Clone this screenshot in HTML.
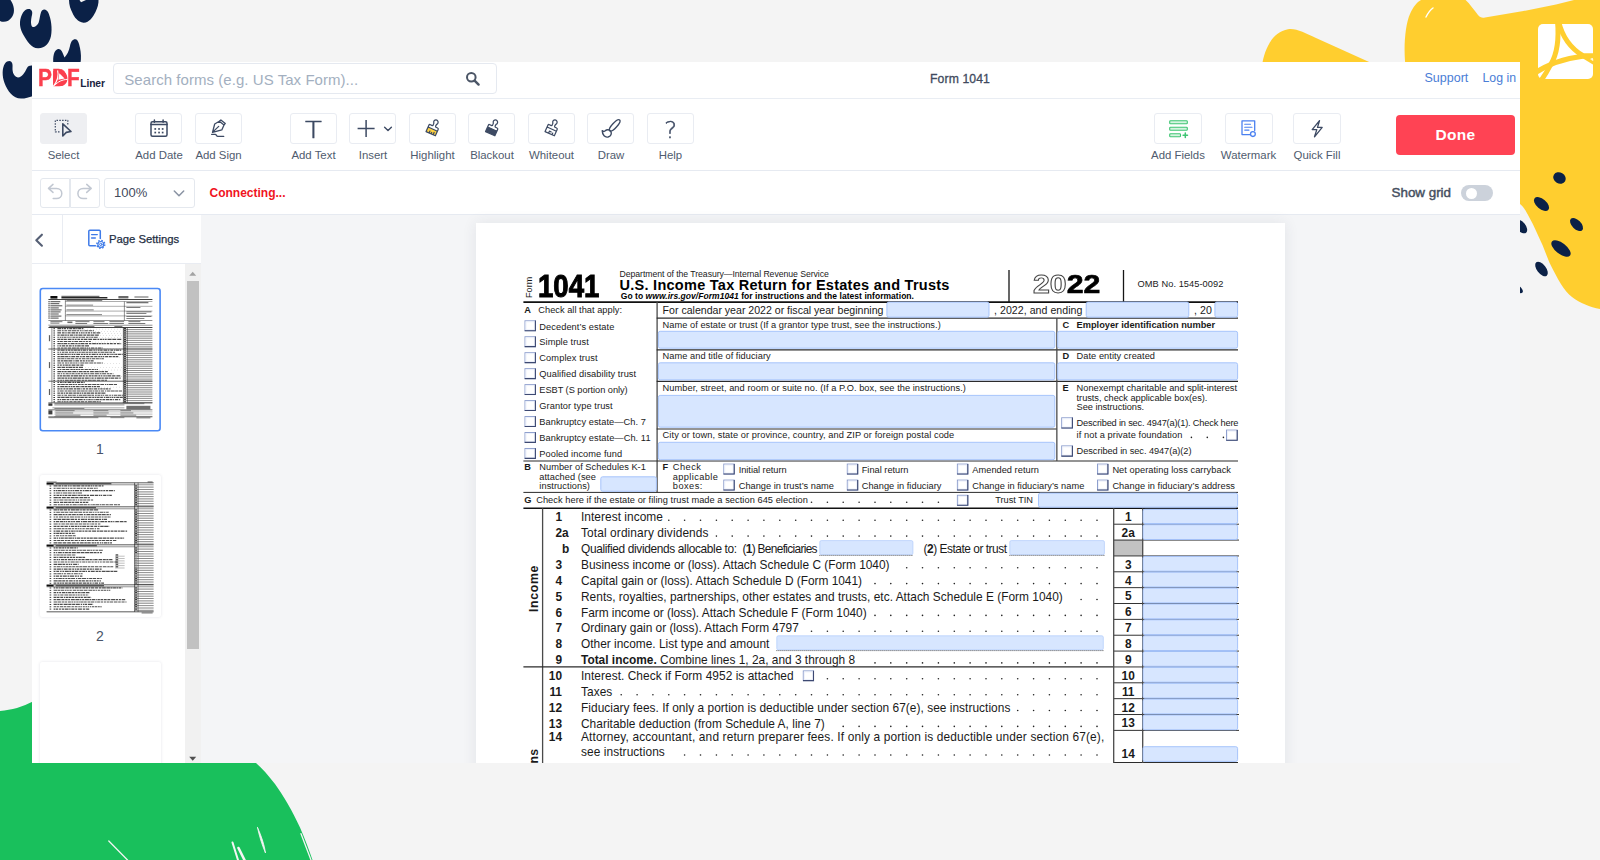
<!DOCTYPE html>
<html lang="en">
<head>
<meta charset="utf-8">
<title>Form 1041 - PDFLiner</title>
<style>
*{box-sizing:border-box;margin:0;padding:0}
html,body{width:1600px;height:860px;overflow:hidden;background:#f4f4f4;font-family:"Liberation Sans",sans-serif;color:#2d3748}
#bg{position:absolute;left:0;top:0;width:1600px;height:860px}
#frame{position:absolute;left:32px;top:62px;width:1488px;height:701px;background:#fff;overflow:hidden}
#w{position:absolute;left:-32px;top:-62px;width:1600px;height:860px}
#w div,#w span,#w svg{position:absolute}
#hdr{left:32px;top:62px;width:1488px;height:37px;border-bottom:1px solid #e9edf3;background:#fff}
#tb{left:32px;top:99px;width:1488px;height:72px;border-bottom:1px solid #e6eaf1;background:#fff}
#sub{left:32px;top:171px;width:1488px;height:44px;border-bottom:1px solid #e6eaf1;background:#fff}
#main{left:32px;top:215px;width:1488px;height:548px;background:#f4f5f7}
.btn{top:113px;width:47px;height:31px;border:1px solid #e9ecf2;border-radius:3px;background:#fff}
.btn.sel{background:#eeeff2;border-color:#eeeff2}
.ic{overflow:visible}
.lbl{top:147.7px;width:90px;text-align:center;font-size:11.4px;line-height:14px;color:#4f5b6e;white-space:nowrap}
.t{white-space:nowrap;line-height:1}
#pg b,#pg i{line-height:0}
</style>
</head>
<body>
<svg id="bg" viewBox="0 0 1600 860">
<g fill="#0b2147">
<path d="M0,0 L10.5,0 C14,5 15.5,12 12,17 C9,21.5 4,23 0,21 Z"/>
<path d="M28,9 C31,8.5 33,11 32,15 C31,19 30.5,24 32,26.5 C34,28 37,26 38.5,23 C40,19 40,13 42,10.5 C44,8.5 47,9.5 48.5,13 C51,19 52.5,28 51,36 C49.5,43 45,48.5 38,48.3 C31,48 27,41 23.5,35 C20,29 19,23 21,17 C22.5,12.5 25,9.5 28,9 Z"/>
<path d="M69,0 C69,5 70.5,9 72.5,13 C74,17 78,22 83.5,22.7 C89,23 93,17 95.5,12 C97.5,8 98.8,3 98.5,0 L86,0 L81,2.3 L79.5,0 Z"/>
<path d="M53.5,64 C52.5,57 54,50 58,49 C61,48.5 62.5,52 63.5,55 L64.5,57.5 C67,55 69,51 70,46 C71,41 73,39 75.5,39.3 C78,39.8 79,43 80,48 C81,53 81.5,58 80.3,64 Z"/>
<path d="M9.3,61 C12,61 13,64 12.5,68 C12.3,72 14,77 18,77.5 C22,77.5 25,72 27,68 C28.5,65.5 31,65 34,66 L40,66 L40,93 C36,94 30,98.6 21,98.6 C13,98.6 7.5,91 4.5,83 C2,76 2,68 5,63.5 C6.3,61.7 7.8,61 9.3,61 Z"/>
</g>
<g fill="#ffce2f">
<path d="M1262,66 C1264,50 1272,32 1288,29.3 C1296,28 1305,33 1316,38 L1378,66 Z"/>
<path d="M1406,70 C1403,50 1405,25 1410,14 C1413,7 1417,2 1421,0 L1465.6,0 C1470,4 1474,10 1478,15 C1480,17.5 1482,18 1485,17.5 L1522,11.3 L1556,4.5 L1574,0 L1600,0 L1600,309 C1590,307 1580,303 1572,297 C1564,291 1558,280 1549.4,262.6 L1542.5,245 C1538,235 1533,224 1529.6,218 C1526,211 1523,206 1519,203 L1500,203 L1500,70 Z"/>
</g>
<path d="M1426,17 C1428,13 1430,10 1433,8" stroke="#fff" stroke-width="1.4" fill="none" stroke-linecap="round"/>
<rect x="1538" y="24" width="55" height="55" rx="5" fill="#fff"/>
<g stroke="#ffce2f" stroke-width="5" fill="none">
<path d="M1557.500,21 C1559,38 1557,54 1551,64 C1548,70 1545,75 1540.500,81.500"/>
<path d="M1558.500,21 C1562,36 1570,48 1583,55.700 L1596,55.700"/>
<path d="M1582,55.500 L1596,64" stroke-width="4"/>
<path d="M1535,73 C1548,64 1565,58.500 1584,56"/>
</g>
<path d="M1590,59.200 L1593.200,59.200 L1593.200,61 Z" fill="#fff"/>
<g fill="#0b2147">
<ellipse cx="1559.5" cy="178" rx="6.5" ry="5.5" transform="rotate(30 1559.5 178)"/>
<ellipse cx="1541.5" cy="204" rx="9" ry="5" transform="rotate(40 1541.5 204)"/>
<ellipse cx="1576.5" cy="224.5" rx="8" ry="4.5" transform="rotate(45 1576.5 224.5)"/>
<ellipse cx="1561" cy="248.500" rx="11.500" ry="5.500" transform="rotate(38 1561 248.500)"/>
<ellipse cx="1541.5" cy="269" rx="8.5" ry="4.500" transform="rotate(52 1541.5 269)"/>
<ellipse cx="1521" cy="226.5" rx="8" ry="4.500" transform="rotate(50 1521 226.5)"/>
<ellipse cx="1519" cy="289" rx="5" ry="2.500" transform="rotate(50 1519 289)"/>
</g>
<path fill="#19c05c" d="M0,711 C12,710 22,707 34,701 L34,760 L254,760 L256,763 C262,768 268,775 275,784 C283,795 293,812 300,827.5 C305,839 309,850 312.5,860 L0,860 Z"/>
<g stroke="#f4f4f4" stroke-width="1.300" fill="none" stroke-linecap="round">
<path d="M108.8,841 L127.5,860"/>
<path d="M232.5,842.5 L238,860" stroke-width="2"/>
<path d="M238.500,848 L244.500,860" stroke-width="2.600"/>
<path d="M257.500,827.5 C261,835 264.500,845 265.500,853 C262,845 259,835 257.500,827.5 Z" fill="#f4f4f4" stroke-width=".8"/>
<path d="M301,833.7 L311,860"/>
</g>
</svg>
<div id="frame"><div id="w">
<div id="hdr"></div>
<div id="tb"></div>
<div id="sub"></div>
<div id="main"></div>

<div id="chr" style="left:0;top:.4px;width:1600px;height:0">
<!-- header -->
<span class="t" id="logo" style="left:38.2px;top:66.9px;font-size:23.3px;font-weight:bold;color:#fb3f4d;transform-origin:0 0;transform:scaleX(.895);letter-spacing:0;-webkit-text-stroke:.4px #fb3f4d">PDF</span>
<svg style="left:50px;top:68px;width:20px;height:20px;overflow:visible" viewBox="50 68 20 20"><path d="M53.1,70.650 L59.500,70.650 C64.500,70.650 67.400,74 67.400,78.400 C67.400,83 64.500,86.100 59.500,86.100 L53.100,86.100 Z" fill="#fb3f4d"/><path d="M57.600,70.300 C58.800,75 57.500,81 53.300,86.400" stroke="#fff" stroke-width="1.100" fill="none"/><path d="M59.300,73.300 L58.400,79.800 L64.600,78.600 Z" fill="#fff"/><path d="M54.500,85.600 C58,81.500 62,79.800 67.600,79.300" stroke="#fff" stroke-width="1" fill="none"/></svg>
<span class="t" id="liner" style="left:80.2px;top:78.5px;font-size:10.3px;letter-spacing:-.1px;font-weight:bold;color:#1a2340">Liner</span>
<div id="search" style="left:112.5px;top:63px;width:384px;height:31px;border:1px solid #e5e9f0;border-radius:4px;background:#fff"></div>
<span class="t" id="ph" style="left:124.3px;top:71.600px;font-size:15px;letter-spacing:.05px;color:#a3afc0">Search forms (e.g. US Tax Form)...</span>
<svg id="sicon" style="left:465px;top:71px;width:16px;height:16px" viewBox="0 0 16 16"><circle cx="6.3" cy="6.3" r="4.3" fill="none" stroke="#4b5566" stroke-width="2"/><path d="M9.6,9.6 L13.6,13.6" stroke="#4b5566" stroke-width="2.4" stroke-linecap="round"/></svg>
<span class="t" id="title" style="left:860px;width:200px;text-align:center;top:72.900px;font-size:12.2px;color:#414a5e;-webkit-text-stroke:.3px #414a5e;letter-spacing:.1px">Form 1041</span>
<span class="t" id="support" style="left:1424.5px;top:72px;font-size:12.5px;color:#4a7dd6">Support</span>
<span class="t" id="login" style="left:1482.5px;top:72px;font-size:12.3px;color:#4a7dd6">Log in</span>

<!-- toolbar buttons -->
<div class="btn sel" style="left:40px"></div>
<div class="btn" style="left:135px"></div>
<div class="btn" style="left:195px"></div>
<div class="btn" style="left:290px"></div>
<div class="btn" style="left:349px"></div>
<div class="btn" style="left:409px"></div>
<div class="btn" style="left:468px"></div>
<div class="btn" style="left:528px"></div>
<div class="btn" style="left:587px"></div>
<div class="btn" style="left:647px"></div>
<div class="btn" style="left:1154px;width:48px"></div>
<div class="btn" style="left:1225px;width:48px"></div>
<div class="btn" style="left:1293px;width:48px"></div>
<span class="lbl" style="left:18.5px">Select</span>
<span class="lbl" style="left:114px">Add Date</span>
<span class="lbl" style="left:173.5px">Add Sign</span>
<span class="lbl" style="left:268.5px">Add Text</span>
<span class="lbl" style="left:328px">Insert</span>
<span class="lbl" style="left:387.5px">Highlight</span>
<span class="lbl" style="left:447px">Blackout</span>
<span class="lbl" style="left:506.5px">Whiteout</span>
<span class="lbl" style="left:566px">Draw</span>
<span class="lbl" style="left:625.5px">Help</span>
<span class="lbl" style="left:1133px">Add Fields</span>
<span class="lbl" style="left:1203.500px">Watermark</span>
<span class="lbl" style="left:1272px">Quick Fill</span>
<div id="done" style="left:1396px;top:115px;width:119px;height:40px;border-radius:4px;background:#ff4354"></div>
<span class="t" id="donet" style="left:1396px;width:119px;text-align:center;top:126.500px;font-size:15.5px;font-weight:bold;color:#fff;letter-spacing:.3px">Done</span>

<!-- sub toolbar -->
<div style="left:40px;top:178px;width:30px;height:30px;border:1px solid #e4e8ee;border-radius:3px 0 0 3px"></div>
<div style="left:70px;top:178px;width:29.5px;height:30px;border:1px solid #e4e8ee;border-radius:0 3px 3px 0"></div>
<div style="left:104px;top:178px;width:90.5px;height:30px;border:1px solid #e4e8ee;border-radius:3px"></div>
<span class="t" style="left:114px;top:186px;font-size:13px;color:#3f4a5c">100%</span>
<svg style="left:173px;top:189px;width:12px;height:9px" viewBox="0 0 12 9"><path d="M1.3,2 L6,6.800 L10.7,2" fill="none" stroke="#8a93a3" stroke-width="1.5" stroke-linecap="round" stroke-linejoin="round"/></svg>
<span class="t" id="conn" style="left:209.500px;top:186.500px;font-size:12px;font-weight:bold;color:#f0141e">Connecting...</span>
<span class="t" id="sg" style="left:1391.500px;top:185.800px;font-size:13.4px;color:#454f60;-webkit-text-stroke:.45px #454f60">Show grid</span>
<div style="left:1460.500px;top:185px;width:32px;height:16px;border-radius:8px;background:#ccd2db"></div>
<div style="left:1465.5px;top:187.5px;width:11px;height:11px;border-radius:6px;background:#fff"></div>
<svg id="icons" style="left:0;top:0;width:1600px;height:860px;overflow:visible" viewBox="0 0 1600 860" fill="none" stroke="#3d4a63" stroke-width="1.4" stroke-linecap="round" stroke-linejoin="round">
<!-- select -->
<path d="M59.500,131.8 L55.300,131.8 L55.300,120.400 L67.800,120.400 L67.800,125" stroke-width="1.2" stroke-dasharray="1.5 1.3" stroke-linecap="butt"/>
<path d="M62.800,123.800 L71,131.500 L66.300,132.400 L62.800,136 Z" stroke-width="1.600" fill="#edeef1"/>
<!-- calendar -->
<rect x="151" y="121.800" width="16" height="14.500" rx="1.500" stroke-width="1.500"/>
<path d="M154.400,119.900 V122.200 M163.100,119.900 V122.200 M151,124.600 H167" stroke-width="1.500"/>
<g fill="#3d4a63" stroke="none"><rect x="154.400" y="128.100" width="1.700" height="1.700"/><rect x="158.200" y="128.100" width="1.700" height="1.700"/><rect x="161.800" y="128.100" width="1.700" height="1.700"/><rect x="154.400" y="131.700" width="1.700" height="1.700"/><rect x="158.200" y="131.700" width="1.700" height="1.700"/><rect x="161.800" y="131.700" width="1.700" height="1.700"/></g>
<!-- pen / sign -->
<path d="M212.500,132.300 L214.700,124 L219.300,121.300 L224,125 L221.800,129.900 Z M219.300,121.300 L220.900,119.900 L225.300,123.400 L224,125 M212.900,131.900 L218.700,126.400" stroke-width="1.300"/>
<path d="M211.600,134.300 L215.200,134.300 C216.500,134.300 216.400,136.400 217.700,136.400 L223.700,136.400" stroke-width="1.300"/>
<!-- plus + chevron -->
<path d="M357.600,128.500 H374.600 M366.100,120 V137" stroke-width="1.500" stroke-linecap="butt"/>
<path d="M384.600,127.200 L388,130.500 L391.400,127.200" stroke-width="1.400"/>
<!-- brushes -->
<g transform="translate(434 126.400) rotate(24.300)">
<rect x="-5.100" y="3" width="10.200" height="5" fill="#ffd23f" stroke="none"/>
<path d="M-5.100,0.600 Q-5.100,0 -4.500,0 L-1.900,0 C-1.300,-0.200 -1.200,-1.500 -1.500,-3 A2.200,2.200 0 1 1 1.500,-3 C1.200,-1.500 1.300,-0.200 2.200,0 L3.900,0 Q5.100,0 5.100,1.200 L5.100,8 L-5.100,8 Z M-5.100,3 H5.100 M-1.800,8 V5.900 M0.400,8 V6.500 M2.600,8 V5.500" stroke-width="1.250"/>
</g>
<g transform="translate(493.500 126.400) rotate(24.300)">
<rect x="-5.100" y="2.800" width="10.200" height="5.200" fill="#3d4a63" stroke="none"/>
<path d="M-5.100,0.600 Q-5.100,0 -4.500,0 L-1.900,0 C-1.300,-0.200 -1.200,-1.500 -1.500,-3 A2.200,2.200 0 1 1 1.500,-3 C1.200,-1.500 1.300,-0.200 2.200,0 L3.900,0 Q5.100,0 5.100,1.200 L5.100,8 L-5.100,8 Z M-5.100,3 H5.100" stroke-width="1.250"/>
</g>
<g transform="translate(553 126.400) rotate(24.300)">
<path d="M-5.100,0.600 Q-5.100,0 -4.500,0 L-1.900,0 C-1.300,-0.200 -1.200,-1.500 -1.500,-3 A2.200,2.200 0 1 1 1.500,-3 C1.200,-1.500 1.300,-0.200 2.200,0 L3.900,0 Q5.100,0 5.100,1.200 L5.100,8 L-5.100,8 Z M-5.100,3 H5.100 M-1.300,8 V5.800 H0.700 M2.500,8 V6.200" stroke-width="1.250"/>
</g>
<!-- draw -->
<ellipse cx="614.700" cy="125.400" rx="7.300" ry="2.400" transform="rotate(-47 614.700 125.400)"/>
<path d="M602.200,130.600 C603.500,131.800 604.500,131.500 605.300,130.800 C606.500,129.300 609.500,129.300 610.800,131.300 C612,133.500 611,136.300 608,137 C605,137.600 602.500,135.500 602.200,130.600 Z"/>
<!-- add fields -->
<g stroke="#3fc573" stroke-width="1.100" fill="#d6f4e1">
<rect x="1169.700" y="120.700" width="17.600" height="3" rx=".8"/>
<rect x="1169.700" y="127.200" width="17.600" height="3" rx=".8"/>
<rect x="1169.700" y="133.700" width="10.800" height="3" rx=".8"/>
<path d="M1185.300,133 V137.400 M1183.100,135.200 H1187.500" stroke-width="1.500" fill="none"/>
</g>
<!-- watermark -->
<g stroke="#4a80f0" stroke-width="1.300">
<path d="M1252,134.600 H1242 V120.800 H1254.700 V130.500"/>
<path d="M1244.700,124.300 H1250.500 M1244.700,127.200 H1252 M1244.700,130.100 H1249" stroke-width="1.100"/>
<circle cx="1252.900" cy="134.100" r="2.400" fill="#fff"/>
</g>
<!-- quick fill -->
<path d="M1319.500,120.700 L1312.200,129.600 L1316.800,129.600 L1314.500,136.800 L1322.200,127.400 L1317.500,127.400 Z" stroke-width="1.300"/>
<!-- undo / redo -->
<g stroke="#c2c8d2" stroke-width="1.500">
<path d="M53,184.400 L48.500,188.400 L53,192.400 M48.700,188.400 L56.500,188.400 C60,188.400 61.800,191 61.800,193.500 C61.800,196.500 59.500,198.600 56.500,198.600 L53.200,198.600"/>
<path d="M86.700,184.400 L91.200,188.400 L86.700,192.400 M91,188.400 L83.200,188.400 C79.700,188.400 77.900,191 77.900,193.500 C77.900,196.500 80.200,198.600 83.200,198.600 L86.500,198.600"/>
</g>
</svg>
<span class="t" id="icT" style="left:290.2px;width:47px;text-align:center;top:118.6px;transform:scaleX(1.2);font-family:'DejaVu Sans',sans-serif;font-weight:200;font-size:23px;color:#3d4a63;-webkit-text-stroke:.4px #3d4a63">T</span>
<span class="t" id="icQ" style="left:647.2px;width:47px;text-align:center;top:118.900px;transform:scaleX(1.08);font-family:'DejaVu Sans',sans-serif;font-weight:200;font-size:23px;color:#3d4a63;-webkit-text-stroke:.35px #3d4a63">?</span>
</div><!--chr-->
<style>.f{background:#d9e7ff;box-shadow:inset 0 0 0 1px #bdd3fb}.fd{background:#d9e7ff;box-shadow:inset 0 0 0 1px #c6d9fc;border-bottom:1px dotted #444}.cb{background:#fff;border:1px solid;border-color:#93a5d6 #5f6e9a #3a4670 #93a5d6;box-shadow:inset 0 0 0 1px #edf1fb}#w i.d{position:absolute;width:1.5px;height:1.5px;background:#222;border-radius:1px}#page .t{color:#1a1a1a}</style>
<div id="page" style="left:476px;top:222.5px;width:809px;height:600px;background:#fff;box-shadow:0 0 14px rgba(40,50,80,.09)"></div>
<div id="pg" style="left:0;top:0;width:1600px;height:860px;color:#1a1a1a">
<svg style="left:0;top:0;width:1600px;height:860px" viewBox="0 0 1600 860" fill="none"><rect x="1113.7" y="539.9" width="29" height="15.9" fill="#c2c2c2"/><path d="M1009.00,270.0 V302.0" stroke="#151515" stroke-width="1.30"/><path d="M1123.50,270.0 V302.0" stroke="#151515" stroke-width="1.30"/><path d="M523.4,302.10 H1238.0" stroke="#111" stroke-width="1.60"/><path d="M657.10,302.0 V492.5" stroke="#4a4a4a" stroke-width="1.30"/><path d="M656.7,318.10 H1238.0" stroke="#2b2b2b" stroke-width="1.20"/><path d="M656.7,349.80 H1238.0" stroke="#2b2b2b" stroke-width="1.20"/><path d="M656.7,381.40 H1238.0" stroke="#2b2b2b" stroke-width="1.20"/><path d="M656.7,429.00 H1056.8" stroke="#2b2b2b" stroke-width="1.20"/><path d="M523.4,461.00 H1238.0" stroke="#2b2b2b" stroke-width="1.20"/><path d="M1056.85,318.0 V461.0" stroke="#4a4a4a" stroke-width="1.30"/><path d="M523.4,492.40 H1238.0" stroke="#2b2b2b" stroke-width="1.00"/><path d="M523.4,508.30 H1238.0" stroke="#111" stroke-width="1.60"/><path d="M542.60,508.2 V770.0" stroke="#4a4a4a" stroke-width="1.30"/><path d="M1113.7,524.21 H1239.0" stroke="#333" stroke-width="1.00"/><path d="M1113.7,540.07 H1239.0" stroke="#333" stroke-width="1.00"/><path d="M1113.7,555.93 H1239.0" stroke="#333" stroke-width="1.00"/><path d="M1113.7,571.79 H1239.0" stroke="#333" stroke-width="1.00"/><path d="M1113.7,587.65 H1239.0" stroke="#333" stroke-width="1.00"/><path d="M1113.7,603.51 H1239.0" stroke="#333" stroke-width="1.00"/><path d="M1113.7,619.37 H1239.0" stroke="#333" stroke-width="1.00"/><path d="M1113.7,635.23 H1239.0" stroke="#333" stroke-width="1.00"/><path d="M1113.7,651.09 H1239.0" stroke="#333" stroke-width="1.00"/><path d="M1113.7,666.95 H1239.0" stroke="#333" stroke-width="1.00"/><path d="M1113.7,682.81 H1239.0" stroke="#333" stroke-width="1.00"/><path d="M1113.7,698.67 H1239.0" stroke="#333" stroke-width="1.00"/><path d="M1113.7,714.53 H1239.0" stroke="#333" stroke-width="1.00"/><path d="M1113.7,730.39 H1239.0" stroke="#333" stroke-width="1.00"/><path d="M1113.7,762.50 H1238.0" stroke="#2b2b2b" stroke-width="1.20"/><path d="M523.4,666.80 H1113.7" stroke="#2b2b2b" stroke-width="1.20"/><path d="M1113.70,508.2 V770.0" stroke="#4a4a4a" stroke-width="1.30"/><path d="M1142.70,508.2 V770.0" stroke="#4a4a4a" stroke-width="1.30"/><rect x="525.00" y="320.80" width="10.40" height="9.90" fill="#fff" stroke="#8e9fce" stroke-width="1"/><rect x="526.00" y="321.80" width="8.40" height="7.90" fill="none" stroke="#edf1fb" stroke-width="1"/><path d="M524.70,330.70 H535.40 V320.60" stroke="#3d4972" stroke-width="1.1"/><rect x="525.00" y="336.76" width="10.40" height="9.90" fill="#fff" stroke="#8e9fce" stroke-width="1"/><rect x="526.00" y="337.76" width="8.40" height="7.90" fill="none" stroke="#edf1fb" stroke-width="1"/><path d="M524.70,346.66 H535.40 V336.56" stroke="#3d4972" stroke-width="1.1"/><rect x="525.00" y="352.72" width="10.40" height="9.90" fill="#fff" stroke="#8e9fce" stroke-width="1"/><rect x="526.00" y="353.72" width="8.40" height="7.90" fill="none" stroke="#edf1fb" stroke-width="1"/><path d="M524.70,362.62 H535.40 V352.52" stroke="#3d4972" stroke-width="1.1"/><rect x="525.00" y="368.68" width="10.40" height="9.90" fill="#fff" stroke="#8e9fce" stroke-width="1"/><rect x="526.00" y="369.68" width="8.40" height="7.90" fill="none" stroke="#edf1fb" stroke-width="1"/><path d="M524.70,378.58 H535.40 V368.48" stroke="#3d4972" stroke-width="1.1"/><rect x="525.00" y="384.64" width="10.40" height="9.90" fill="#fff" stroke="#8e9fce" stroke-width="1"/><rect x="526.00" y="385.64" width="8.40" height="7.90" fill="none" stroke="#edf1fb" stroke-width="1"/><path d="M524.70,394.54 H535.40 V384.44" stroke="#3d4972" stroke-width="1.1"/><rect x="525.00" y="400.60" width="10.40" height="9.90" fill="#fff" stroke="#8e9fce" stroke-width="1"/><rect x="526.00" y="401.60" width="8.40" height="7.90" fill="none" stroke="#edf1fb" stroke-width="1"/><path d="M524.70,410.50 H535.40 V400.40" stroke="#3d4972" stroke-width="1.1"/><rect x="525.00" y="416.56" width="10.40" height="9.90" fill="#fff" stroke="#8e9fce" stroke-width="1"/><rect x="526.00" y="417.56" width="8.40" height="7.90" fill="none" stroke="#edf1fb" stroke-width="1"/><path d="M524.70,426.46 H535.40 V416.36" stroke="#3d4972" stroke-width="1.1"/><rect x="525.00" y="432.52" width="10.40" height="9.90" fill="#fff" stroke="#8e9fce" stroke-width="1"/><rect x="526.00" y="433.52" width="8.40" height="7.90" fill="none" stroke="#edf1fb" stroke-width="1"/><path d="M524.70,442.42 H535.40 V432.32" stroke="#3d4972" stroke-width="1.1"/><rect x="525.00" y="448.48" width="10.40" height="9.90" fill="#fff" stroke="#8e9fce" stroke-width="1"/><rect x="526.00" y="449.48" width="8.40" height="7.90" fill="none" stroke="#edf1fb" stroke-width="1"/><path d="M524.70,458.38 H535.40 V448.28" stroke="#3d4972" stroke-width="1.1"/><rect x="886.9" y="302.1" width="102.1" height="15.1" rx="1.8" fill="#d7e6ff" stroke="#9fbffa" stroke-width=".9"/><rect x="1086.2" y="302.1" width="102.6" height="15.1" rx="1.8" fill="#d7e6ff" stroke="#9fbffa" stroke-width=".9"/><rect x="1214.9" y="302.1" width="22.7" height="15.1" rx="1.8" fill="#d7e6ff" stroke="#9fbffa" stroke-width=".9"/><rect x="658.4" y="331.3" width="396.4" height="16.9" rx="1.8" fill="#d7e6ff" stroke="#9fbffa" stroke-width=".9"/><rect x="658.4" y="362.8" width="396.4" height="17.1" rx="1.8" fill="#d7e6ff" stroke="#9fbffa" stroke-width=".9"/><rect x="658.4" y="395.4" width="396.4" height="31.8" rx="1.8" fill="#d7e6ff" stroke="#9fbffa" stroke-width=".9"/><rect x="658.4" y="442.3" width="396.4" height="17.4" rx="1.8" fill="#d7e6ff" stroke="#9fbffa" stroke-width=".9"/><rect x="1057.7" y="331.3" width="179.9" height="16.9" rx="1.8" fill="#d7e6ff" stroke="#9fbffa" stroke-width=".9"/><rect x="1057.7" y="362.8" width="179.9" height="17.1" rx="1.8" fill="#d7e6ff" stroke="#9fbffa" stroke-width=".9"/><rect x="1061.70" y="417.80" width="10.70" height="10.20" fill="#fff" stroke="#8e9fce" stroke-width="1"/><rect x="1062.70" y="418.80" width="8.70" height="8.20" fill="none" stroke="#edf1fb" stroke-width="1"/><path d="M1061.40,428.00 H1072.40 V417.60" stroke="#3d4972" stroke-width="1.1"/><rect x="1226.50" y="430.10" width="10.70" height="10.20" fill="#fff" stroke="#8e9fce" stroke-width="1"/><rect x="1227.50" y="431.10" width="8.70" height="8.20" fill="none" stroke="#edf1fb" stroke-width="1"/><path d="M1226.20,440.30 H1237.20 V429.90" stroke="#3d4972" stroke-width="1.1"/><rect x="1061.70" y="445.90" width="10.70" height="10.20" fill="#fff" stroke="#8e9fce" stroke-width="1"/><rect x="1062.70" y="446.90" width="8.70" height="8.20" fill="none" stroke="#edf1fb" stroke-width="1"/><path d="M1061.40,456.10 H1072.40 V445.70" stroke="#3d4972" stroke-width="1.1"/><rect x="600.8" y="476.8" width="55.6" height="14.5" rx="1.8" fill="#d7e6ff" stroke="#9fbffa" stroke-width=".9"/><rect x="723.80" y="464.10" width="10.40" height="9.90" fill="#fff" stroke="#8e9fce" stroke-width="1"/><rect x="724.80" y="465.10" width="8.40" height="7.90" fill="none" stroke="#edf1fb" stroke-width="1"/><path d="M723.50,474.00 H734.20 V463.90" stroke="#3d4972" stroke-width="1.1"/><rect x="723.80" y="480.10" width="10.40" height="9.90" fill="#fff" stroke="#8e9fce" stroke-width="1"/><rect x="724.80" y="481.10" width="8.40" height="7.90" fill="none" stroke="#edf1fb" stroke-width="1"/><path d="M723.50,490.00 H734.20 V479.90" stroke="#3d4972" stroke-width="1.1"/><rect x="847.30" y="464.10" width="10.40" height="9.90" fill="#fff" stroke="#8e9fce" stroke-width="1"/><rect x="848.30" y="465.10" width="8.40" height="7.90" fill="none" stroke="#edf1fb" stroke-width="1"/><path d="M847.00,474.00 H857.70 V463.90" stroke="#3d4972" stroke-width="1.1"/><rect x="847.30" y="480.10" width="10.40" height="9.90" fill="#fff" stroke="#8e9fce" stroke-width="1"/><rect x="848.30" y="481.10" width="8.40" height="7.90" fill="none" stroke="#edf1fb" stroke-width="1"/><path d="M847.00,490.00 H857.70 V479.90" stroke="#3d4972" stroke-width="1.1"/><rect x="957.40" y="464.10" width="10.40" height="9.90" fill="#fff" stroke="#8e9fce" stroke-width="1"/><rect x="958.40" y="465.10" width="8.40" height="7.90" fill="none" stroke="#edf1fb" stroke-width="1"/><path d="M957.10,474.00 H967.80 V463.90" stroke="#3d4972" stroke-width="1.1"/><rect x="957.40" y="480.10" width="10.40" height="9.90" fill="#fff" stroke="#8e9fce" stroke-width="1"/><rect x="958.40" y="481.10" width="8.40" height="7.90" fill="none" stroke="#edf1fb" stroke-width="1"/><path d="M957.10,490.00 H967.80 V479.90" stroke="#3d4972" stroke-width="1.1"/><rect x="1097.50" y="464.10" width="10.40" height="9.90" fill="#fff" stroke="#8e9fce" stroke-width="1"/><rect x="1098.50" y="465.10" width="8.40" height="7.90" fill="none" stroke="#edf1fb" stroke-width="1"/><path d="M1097.20,474.00 H1107.90 V463.90" stroke="#3d4972" stroke-width="1.1"/><rect x="1097.50" y="480.10" width="10.40" height="9.90" fill="#fff" stroke="#8e9fce" stroke-width="1"/><rect x="1098.50" y="481.10" width="8.40" height="7.90" fill="none" stroke="#edf1fb" stroke-width="1"/><path d="M1097.20,490.00 H1107.90 V479.90" stroke="#3d4972" stroke-width="1.1"/><rect x="957.40" y="495.30" width="10.40" height="9.90" fill="#fff" stroke="#8e9fce" stroke-width="1"/><rect x="958.40" y="496.30" width="8.40" height="7.90" fill="none" stroke="#edf1fb" stroke-width="1"/><path d="M957.10,505.20 H967.80 V495.10" stroke="#3d4972" stroke-width="1.1"/><rect x="1038.5" y="493.1" width="199.1" height="14.1" rx="1.8" fill="#d7e6ff" stroke="#9fbffa" stroke-width=".9"/><rect x="1143.0" y="509.3" width="94.6" height="14.2" rx="1.8" fill="#d7e6ff" stroke="#9fbffa" stroke-width=".9"/><rect x="1143.0" y="524.7" width="94.6" height="14.8" rx="1.8" fill="#d7e6ff" stroke="#9fbffa" stroke-width=".9"/><rect x="819.8" y="540.6" width="93.1" height="14.1" rx="1.5" fill="#d7e6ff" stroke="#b7cffb" stroke-width=".8"/><path d="M819.4,555.4 H913.3" stroke="#555" stroke-width="1" stroke-dasharray="1 1"/><rect x="1009.8" y="540.6" width="94.6" height="14.1" rx="1.5" fill="#d7e6ff" stroke="#b7cffb" stroke-width=".8"/><path d="M1009.4,555.4 H1104.8" stroke="#555" stroke-width="1" stroke-dasharray="1 1"/><rect x="1143.0" y="556.4" width="94.6" height="14.8" rx="1.8" fill="#d7e6ff" stroke="#9fbffa" stroke-width=".9"/><rect x="1143.0" y="572.2" width="94.6" height="14.8" rx="1.8" fill="#d7e6ff" stroke="#9fbffa" stroke-width=".9"/><rect x="1143.0" y="588.1" width="94.6" height="14.8" rx="1.8" fill="#d7e6ff" stroke="#9fbffa" stroke-width=".9"/><rect x="1143.0" y="604.0" width="94.6" height="14.8" rx="1.8" fill="#d7e6ff" stroke="#9fbffa" stroke-width=".9"/><rect x="1143.0" y="619.8" width="94.6" height="14.8" rx="1.8" fill="#d7e6ff" stroke="#9fbffa" stroke-width=".9"/><rect x="776.8" y="635.8" width="326.5" height="14.1" rx="1.5" fill="#d7e6ff" stroke="#b7cffb" stroke-width=".8"/><path d="M776.4,650.6 H1103.7" stroke="#555" stroke-width="1" stroke-dasharray="1 1"/><rect x="1143.0" y="635.7" width="94.6" height="14.8" rx="1.8" fill="#d7e6ff" stroke="#9fbffa" stroke-width=".9"/><rect x="1143.0" y="651.5" width="94.6" height="14.8" rx="1.8" fill="#d7e6ff" stroke="#9fbffa" stroke-width=".9"/><rect x="803.30" y="670.90" width="10.20" height="9.70" fill="#fff" stroke="#8e9fce" stroke-width="1"/><rect x="804.30" y="671.90" width="8.20" height="7.70" fill="none" stroke="#edf1fb" stroke-width="1"/><path d="M803.00,680.60 H813.50 V670.70" stroke="#3d4972" stroke-width="1.1"/><rect x="1143.0" y="667.4" width="94.6" height="14.8" rx="1.8" fill="#d7e6ff" stroke="#9fbffa" stroke-width=".9"/><rect x="1143.0" y="683.3" width="94.6" height="14.8" rx="1.8" fill="#d7e6ff" stroke="#9fbffa" stroke-width=".9"/><rect x="1143.0" y="699.1" width="94.6" height="14.8" rx="1.8" fill="#d7e6ff" stroke="#9fbffa" stroke-width=".9"/><rect x="1143.0" y="715.0" width="94.6" height="14.8" rx="1.8" fill="#d7e6ff" stroke="#9fbffa" stroke-width=".9"/><rect x="1143.0" y="746.7" width="94.6" height="14.7" rx="1.8" fill="#d7e6ff" stroke="#9fbffa" stroke-width=".9"/><g fill="#222"><circle cx="1191.4" cy="437.4" r=".8"/><circle cx="1207.3" cy="437.4" r=".8"/><circle cx="1223.4" cy="437.4" r=".8"/><circle cx="938.4" cy="502.3" r=".8"/><circle cx="922.5" cy="502.3" r=".8"/><circle cx="906.7" cy="502.3" r=".8"/><circle cx="890.8" cy="502.3" r=".8"/><circle cx="875.0" cy="502.3" r=".8"/><circle cx="859.1" cy="502.3" r=".8"/><circle cx="843.2" cy="502.3" r=".8"/><circle cx="827.4" cy="502.3" r=".8"/><circle cx="811.5" cy="502.3" r=".8"/><circle cx="1097.0" cy="520.2" r=".8"/><circle cx="1081.1" cy="520.2" r=".8"/><circle cx="1065.3" cy="520.2" r=".8"/><circle cx="1049.4" cy="520.2" r=".8"/><circle cx="1033.6" cy="520.2" r=".8"/><circle cx="1017.7" cy="520.2" r=".8"/><circle cx="1001.8" cy="520.2" r=".8"/><circle cx="986.0" cy="520.2" r=".8"/><circle cx="970.1" cy="520.2" r=".8"/><circle cx="954.3" cy="520.2" r=".8"/><circle cx="938.4" cy="520.2" r=".8"/><circle cx="922.5" cy="520.2" r=".8"/><circle cx="906.7" cy="520.2" r=".8"/><circle cx="890.8" cy="520.2" r=".8"/><circle cx="875.0" cy="520.2" r=".8"/><circle cx="859.1" cy="520.2" r=".8"/><circle cx="843.2" cy="520.2" r=".8"/><circle cx="827.4" cy="520.2" r=".8"/><circle cx="811.5" cy="520.2" r=".8"/><circle cx="795.7" cy="520.2" r=".8"/><circle cx="779.8" cy="520.2" r=".8"/><circle cx="763.9" cy="520.2" r=".8"/><circle cx="748.1" cy="520.2" r=".8"/><circle cx="732.2" cy="520.2" r=".8"/><circle cx="716.4" cy="520.2" r=".8"/><circle cx="700.5" cy="520.2" r=".8"/><circle cx="684.6" cy="520.2" r=".8"/><circle cx="668.8" cy="520.2" r=".8"/><circle cx="1097.0" cy="536.1" r=".8"/><circle cx="1081.1" cy="536.1" r=".8"/><circle cx="1065.3" cy="536.1" r=".8"/><circle cx="1049.4" cy="536.1" r=".8"/><circle cx="1033.6" cy="536.1" r=".8"/><circle cx="1017.7" cy="536.1" r=".8"/><circle cx="1001.8" cy="536.1" r=".8"/><circle cx="986.0" cy="536.1" r=".8"/><circle cx="970.1" cy="536.1" r=".8"/><circle cx="954.3" cy="536.1" r=".8"/><circle cx="938.4" cy="536.1" r=".8"/><circle cx="922.5" cy="536.1" r=".8"/><circle cx="906.7" cy="536.1" r=".8"/><circle cx="890.8" cy="536.1" r=".8"/><circle cx="875.0" cy="536.1" r=".8"/><circle cx="859.1" cy="536.1" r=".8"/><circle cx="843.2" cy="536.1" r=".8"/><circle cx="827.4" cy="536.1" r=".8"/><circle cx="811.5" cy="536.1" r=".8"/><circle cx="795.7" cy="536.1" r=".8"/><circle cx="779.8" cy="536.1" r=".8"/><circle cx="763.9" cy="536.1" r=".8"/><circle cx="748.1" cy="536.1" r=".8"/><circle cx="732.2" cy="536.1" r=".8"/><circle cx="716.4" cy="536.1" r=".8"/><circle cx="1097.0" cy="567.8" r=".8"/><circle cx="1081.1" cy="567.8" r=".8"/><circle cx="1065.3" cy="567.8" r=".8"/><circle cx="1049.4" cy="567.8" r=".8"/><circle cx="1033.6" cy="567.8" r=".8"/><circle cx="1017.7" cy="567.8" r=".8"/><circle cx="1001.8" cy="567.8" r=".8"/><circle cx="986.0" cy="567.8" r=".8"/><circle cx="970.1" cy="567.8" r=".8"/><circle cx="954.3" cy="567.8" r=".8"/><circle cx="938.4" cy="567.8" r=".8"/><circle cx="922.5" cy="567.8" r=".8"/><circle cx="906.7" cy="567.8" r=".8"/><circle cx="1097.0" cy="583.6" r=".8"/><circle cx="1081.1" cy="583.6" r=".8"/><circle cx="1065.3" cy="583.6" r=".8"/><circle cx="1049.4" cy="583.6" r=".8"/><circle cx="1033.6" cy="583.6" r=".8"/><circle cx="1017.7" cy="583.6" r=".8"/><circle cx="1001.8" cy="583.6" r=".8"/><circle cx="986.0" cy="583.6" r=".8"/><circle cx="970.1" cy="583.6" r=".8"/><circle cx="954.3" cy="583.6" r=".8"/><circle cx="938.4" cy="583.6" r=".8"/><circle cx="922.5" cy="583.6" r=".8"/><circle cx="906.7" cy="583.6" r=".8"/><circle cx="890.8" cy="583.6" r=".8"/><circle cx="875.0" cy="583.6" r=".8"/><circle cx="1097.0" cy="599.5" r=".8"/><circle cx="1081.1" cy="599.5" r=".8"/><circle cx="1097.0" cy="615.4" r=".8"/><circle cx="1081.1" cy="615.4" r=".8"/><circle cx="1065.3" cy="615.4" r=".8"/><circle cx="1049.4" cy="615.4" r=".8"/><circle cx="1033.6" cy="615.4" r=".8"/><circle cx="1017.7" cy="615.4" r=".8"/><circle cx="1001.8" cy="615.4" r=".8"/><circle cx="986.0" cy="615.4" r=".8"/><circle cx="970.1" cy="615.4" r=".8"/><circle cx="954.3" cy="615.4" r=".8"/><circle cx="938.4" cy="615.4" r=".8"/><circle cx="922.5" cy="615.4" r=".8"/><circle cx="906.7" cy="615.4" r=".8"/><circle cx="890.8" cy="615.4" r=".8"/><circle cx="875.0" cy="615.4" r=".8"/><circle cx="1097.0" cy="631.2" r=".8"/><circle cx="1081.1" cy="631.2" r=".8"/><circle cx="1065.3" cy="631.2" r=".8"/><circle cx="1049.4" cy="631.2" r=".8"/><circle cx="1033.6" cy="631.2" r=".8"/><circle cx="1017.7" cy="631.2" r=".8"/><circle cx="1001.8" cy="631.2" r=".8"/><circle cx="986.0" cy="631.2" r=".8"/><circle cx="970.1" cy="631.2" r=".8"/><circle cx="954.3" cy="631.2" r=".8"/><circle cx="938.4" cy="631.2" r=".8"/><circle cx="922.5" cy="631.2" r=".8"/><circle cx="906.7" cy="631.2" r=".8"/><circle cx="890.8" cy="631.2" r=".8"/><circle cx="875.0" cy="631.2" r=".8"/><circle cx="859.1" cy="631.2" r=".8"/><circle cx="843.2" cy="631.2" r=".8"/><circle cx="827.4" cy="631.2" r=".8"/><circle cx="811.5" cy="631.2" r=".8"/><circle cx="1097.0" cy="662.9" r=".8"/><circle cx="1081.1" cy="662.9" r=".8"/><circle cx="1065.3" cy="662.9" r=".8"/><circle cx="1049.4" cy="662.9" r=".8"/><circle cx="1033.6" cy="662.9" r=".8"/><circle cx="1017.7" cy="662.9" r=".8"/><circle cx="1001.8" cy="662.9" r=".8"/><circle cx="986.0" cy="662.9" r=".8"/><circle cx="970.1" cy="662.9" r=".8"/><circle cx="954.3" cy="662.9" r=".8"/><circle cx="938.4" cy="662.9" r=".8"/><circle cx="922.5" cy="662.9" r=".8"/><circle cx="906.7" cy="662.9" r=".8"/><circle cx="890.8" cy="662.9" r=".8"/><circle cx="875.0" cy="662.9" r=".8"/><circle cx="1097.0" cy="678.8" r=".8"/><circle cx="1081.1" cy="678.8" r=".8"/><circle cx="1065.3" cy="678.8" r=".8"/><circle cx="1049.4" cy="678.8" r=".8"/><circle cx="1033.6" cy="678.8" r=".8"/><circle cx="1017.7" cy="678.8" r=".8"/><circle cx="1001.8" cy="678.8" r=".8"/><circle cx="986.0" cy="678.8" r=".8"/><circle cx="970.1" cy="678.8" r=".8"/><circle cx="954.3" cy="678.8" r=".8"/><circle cx="938.4" cy="678.8" r=".8"/><circle cx="922.5" cy="678.8" r=".8"/><circle cx="906.7" cy="678.8" r=".8"/><circle cx="890.8" cy="678.8" r=".8"/><circle cx="875.0" cy="678.8" r=".8"/><circle cx="859.1" cy="678.8" r=".8"/><circle cx="843.2" cy="678.8" r=".8"/><circle cx="827.4" cy="678.8" r=".8"/><circle cx="1097.0" cy="694.7" r=".8"/><circle cx="1081.1" cy="694.7" r=".8"/><circle cx="1065.3" cy="694.7" r=".8"/><circle cx="1049.4" cy="694.7" r=".8"/><circle cx="1033.6" cy="694.7" r=".8"/><circle cx="1017.7" cy="694.7" r=".8"/><circle cx="1001.8" cy="694.7" r=".8"/><circle cx="986.0" cy="694.7" r=".8"/><circle cx="970.1" cy="694.7" r=".8"/><circle cx="954.3" cy="694.7" r=".8"/><circle cx="938.4" cy="694.7" r=".8"/><circle cx="922.5" cy="694.7" r=".8"/><circle cx="906.7" cy="694.7" r=".8"/><circle cx="890.8" cy="694.7" r=".8"/><circle cx="875.0" cy="694.7" r=".8"/><circle cx="859.1" cy="694.7" r=".8"/><circle cx="843.2" cy="694.7" r=".8"/><circle cx="827.4" cy="694.7" r=".8"/><circle cx="811.5" cy="694.7" r=".8"/><circle cx="795.7" cy="694.7" r=".8"/><circle cx="779.8" cy="694.7" r=".8"/><circle cx="763.9" cy="694.7" r=".8"/><circle cx="748.1" cy="694.7" r=".8"/><circle cx="732.2" cy="694.7" r=".8"/><circle cx="716.4" cy="694.7" r=".8"/><circle cx="700.5" cy="694.7" r=".8"/><circle cx="684.6" cy="694.7" r=".8"/><circle cx="668.8" cy="694.7" r=".8"/><circle cx="652.9" cy="694.7" r=".8"/><circle cx="637.1" cy="694.7" r=".8"/><circle cx="621.2" cy="694.7" r=".8"/><circle cx="1097.0" cy="710.5" r=".8"/><circle cx="1081.1" cy="710.5" r=".8"/><circle cx="1065.3" cy="710.5" r=".8"/><circle cx="1049.4" cy="710.5" r=".8"/><circle cx="1033.6" cy="710.5" r=".8"/><circle cx="1017.7" cy="710.5" r=".8"/><circle cx="1097.0" cy="726.4" r=".8"/><circle cx="1081.1" cy="726.4" r=".8"/><circle cx="1065.3" cy="726.4" r=".8"/><circle cx="1049.4" cy="726.4" r=".8"/><circle cx="1033.6" cy="726.4" r=".8"/><circle cx="1017.7" cy="726.4" r=".8"/><circle cx="1001.8" cy="726.4" r=".8"/><circle cx="986.0" cy="726.4" r=".8"/><circle cx="970.1" cy="726.4" r=".8"/><circle cx="954.3" cy="726.4" r=".8"/><circle cx="938.4" cy="726.4" r=".8"/><circle cx="922.5" cy="726.4" r=".8"/><circle cx="906.7" cy="726.4" r=".8"/><circle cx="890.8" cy="726.4" r=".8"/><circle cx="875.0" cy="726.4" r=".8"/><circle cx="859.1" cy="726.4" r=".8"/><circle cx="843.2" cy="726.4" r=".8"/><circle cx="1097.0" cy="755.0" r=".8"/><circle cx="1081.1" cy="755.0" r=".8"/><circle cx="1065.3" cy="755.0" r=".8"/><circle cx="1049.4" cy="755.0" r=".8"/><circle cx="1033.6" cy="755.0" r=".8"/><circle cx="1017.7" cy="755.0" r=".8"/><circle cx="1001.8" cy="755.0" r=".8"/><circle cx="986.0" cy="755.0" r=".8"/><circle cx="970.1" cy="755.0" r=".8"/><circle cx="954.3" cy="755.0" r=".8"/><circle cx="938.4" cy="755.0" r=".8"/><circle cx="922.5" cy="755.0" r=".8"/><circle cx="906.7" cy="755.0" r=".8"/><circle cx="890.8" cy="755.0" r=".8"/><circle cx="875.0" cy="755.0" r=".8"/><circle cx="859.1" cy="755.0" r=".8"/><circle cx="843.2" cy="755.0" r=".8"/><circle cx="827.4" cy="755.0" r=".8"/><circle cx="811.5" cy="755.0" r=".8"/><circle cx="795.7" cy="755.0" r=".8"/><circle cx="779.8" cy="755.0" r=".8"/><circle cx="763.9" cy="755.0" r=".8"/><circle cx="748.1" cy="755.0" r=".8"/><circle cx="732.2" cy="755.0" r=".8"/><circle cx="716.4" cy="755.0" r=".8"/><circle cx="700.5" cy="755.0" r=".8"/><circle cx="684.6" cy="755.0" r=".8"/></g></svg>
<span class="t" style="left:524.5px;top:297.5px;font-size:9px;transform-origin:0 0;transform:rotate(-90deg);letter-spacing:.1px">Form</span>
<span class="t" id="n1041" style="left:538.2px;top:269.800px;font-size:32px;font-weight:bold;color:#000;transform-origin:0 0;transform:scaleX(.862);-webkit-text-stroke:1px #000">1041</span>
<span class="t" style="left:619.5px;top:270.1px;font-size:8.70px;letter-spacing:-0.054px;">Department of the Treasury—Internal Revenue Service</span>
<span class="t" style="left:619.5px;top:277.9px;font-size:14.50px;font-weight:bold;color:#000;letter-spacing:0.271px;">U.S. Income Tax Return for Estates and Trusts</span>
<span class="t" style="left:620.8px;top:292.2px;font-size:8.50px;font-weight:bold;letter-spacing:0.043px;color:#000">Go to <i style="font-style:italic">www.irs.gov/Form1041</i> for instructions and the latest information.</span>
<span class="t" style="left:1033px;top:272.3px;font-size:25px;font-weight:bold;transform-origin:0 0;transform:scaleX(1.21);letter-spacing:0"><span style="position:static;color:#fff;-webkit-text-stroke:.9px #444">20</span><span style="position:static;color:#000;-webkit-text-stroke:.6px #000">22</span></span>
<span class="t" style="left:1137.6px;top:279.9px;font-size:9.25px;letter-spacing:0.057px;">OMB No. 1545-0092</span>
<span class="t" style="left:524.2px;top:306.4px;font-size:9.25px;font-weight:bold;">A</span>
<span class="t" style="left:538.3px;top:306.4px;font-size:9.25px;letter-spacing:0.020px;">Check all that apply:</span>
<span class="t" style="left:539.3px;top:322.5px;font-size:9.25px;letter-spacing:0.072px;">Decedent’s estate</span>
<span class="t" style="left:539.3px;top:338.4px;font-size:9.25px;letter-spacing:0.056px;">Simple trust</span>
<span class="t" style="left:539.3px;top:354.4px;font-size:9.25px;letter-spacing:0.103px;">Complex trust</span>
<span class="t" style="left:539.3px;top:370.4px;font-size:9.25px;letter-spacing:0.069px;">Qualified disability trust</span>
<span class="t" style="left:539.3px;top:386.3px;font-size:9.25px;letter-spacing:-0.047px;">ESBT (S portion only)</span>
<span class="t" style="left:539.3px;top:402.3px;font-size:9.25px;letter-spacing:0.080px;">Grantor type trust</span>
<span class="t" style="left:539.3px;top:418.2px;font-size:9.25px;letter-spacing:0.052px;">Bankruptcy estate—Ch. 7</span>
<span class="t" style="left:539.3px;top:434.2px;font-size:9.25px;letter-spacing:0.060px;">Bankruptcy estate—Ch. 11</span>
<span class="t" style="left:539.3px;top:450.2px;font-size:9.25px;letter-spacing:0.063px;">Pooled income fund</span>
<span class="t" style="left:662.6px;top:305.3px;font-size:10.60px;letter-spacing:-0.013px;">For calendar year 2022 or fiscal year beginning</span>
<span class="t" style="left:994.0px;top:305.3px;font-size:10.60px;letter-spacing:0.038px;">, 2022, and ending</span>
<span class="t" style="left:1194.0px;top:305.3px;font-size:10.60px;letter-spacing:0.080px;">, 20</span>
<span class="t" style="left:662.6px;top:320.5px;font-size:9.25px;letter-spacing:0.036px;">Name of estate or trust (If a grantor type trust, see the instructions.)</span>
<span class="t" style="left:662.6px;top:352.2px;font-size:9.25px;letter-spacing:0.043px;">Name and title of fiduciary</span>
<span class="t" style="left:662.6px;top:383.8px;font-size:9.25px;letter-spacing:0.049px;">Number, street, and room or suite no. (If a P.O. box, see the instructions.)</span>
<span class="t" style="left:662.6px;top:431.2px;font-size:9.25px;letter-spacing:0.079px;">City or town, state or province, country, and ZIP or foreign postal code</span>
<span class="t" style="left:1062.5px;top:320.5px;font-size:9.25px;font-weight:bold;">C</span>
<span class="t" style="left:1076.6px;top:320.5px;font-size:9.25px;font-weight:bold;letter-spacing:-0.012px;">Employer identification number</span>
<span class="t" style="left:1062.5px;top:352.2px;font-size:9.25px;font-weight:bold;">D</span>
<span class="t" style="left:1076.6px;top:352.2px;font-size:9.25px;letter-spacing:0.040px;">Date entity created</span>
<span class="t" style="left:1062.5px;top:383.8px;font-size:9.25px;font-weight:bold;">E</span>
<span class="t" style="left:1076.6px;top:383.8px;font-size:9.25px;letter-spacing:-0.000px;">Nonexempt charitable and split-interest</span>
<span class="t" style="left:1076.6px;top:393.5px;font-size:9.25px;letter-spacing:-0.043px;">trusts, check applicable box(es).</span>
<span class="t" style="left:1076.6px;top:402.9px;font-size:9.25px;letter-spacing:-0.058px;">See instructions.</span>
<span class="t" style="left:1076.6px;top:418.9px;font-size:9.25px;letter-spacing:-0.186px;">Described in sec. 4947(a)(1). Check here</span>
<span class="t" style="left:1076.6px;top:431.2px;font-size:9.25px;letter-spacing:0.072px;">if not a private foundation</span>
<span class="t" style="left:1076.6px;top:446.9px;font-size:9.25px;letter-spacing:-0.068px;">Described in sec. 4947(a)(2)</span>
<span class="t" style="left:524.2px;top:462.9px;font-size:9.25px;font-weight:bold;">B</span>
<span class="t" style="left:539.3px;top:462.9px;font-size:9.25px;letter-spacing:0.030px;">Number of Schedules K-1</span>
<span class="t" style="left:539.3px;top:472.5px;font-size:9.25px;letter-spacing:0.050px;">attached (see</span>
<span class="t" style="left:539.3px;top:481.8px;font-size:9.25px;letter-spacing:0.065px;">instructions)</span>
<span class="t" style="left:662.6px;top:462.9px;font-size:9.25px;font-weight:bold;">F</span>
<span class="t" style="left:672.8px;top:462.9px;font-size:9.25px;letter-spacing:0.496px;">Check</span>
<span class="t" style="left:672.8px;top:472.5px;font-size:9.25px;letter-spacing:0.375px;">applicable</span>
<span class="t" style="left:672.8px;top:481.8px;font-size:9.25px;letter-spacing:0.458px;">boxes:</span>
<span class="t" style="left:738.7px;top:465.6px;font-size:9.25px;letter-spacing:-0.030px;">Initial return</span>
<span class="t" style="left:738.7px;top:481.5px;font-size:9.25px;letter-spacing:0.016px;">Change in trust’s name</span>
<span class="t" style="left:861.7px;top:465.6px;font-size:9.25px;">Final return</span>
<span class="t" style="left:861.7px;top:481.5px;font-size:9.25px;letter-spacing:0.033px;">Change in fiduciary</span>
<span class="t" style="left:972.3px;top:465.6px;font-size:9.25px;letter-spacing:0.020px;">Amended return</span>
<span class="t" style="left:972.3px;top:481.5px;font-size:9.25px;letter-spacing:0.023px;">Change in fiduciary’s name</span>
<span class="t" style="left:1112.4px;top:465.6px;font-size:9.25px;letter-spacing:0.050px;">Net operating loss carryback</span>
<span class="t" style="left:1112.4px;top:481.5px;font-size:9.25px;letter-spacing:0.049px;">Change in fiduciary’s address</span>
<span class="t" style="left:524.2px;top:495.6px;font-size:9.25px;font-weight:bold;">G</span>
<span class="t" style="left:536.2px;top:495.6px;font-size:9.25px;letter-spacing:0.049px;">Check here if the estate or filing trust made a section 645 election</span>
<span class="t" style="left:995.3px;top:495.6px;font-size:9.25px;letter-spacing:-0.036px;">Trust TIN</span>
<span class="t" style="left:555.4px;top:512.4px;font-size:11.90px;font-weight:bold;">1</span>
<span class="t" style="left:581.0px;top:512.4px;font-size:11.90px;letter-spacing:0.043px;">Interest income</span>
<span class="t" style="left:1113.7px;width:29px;text-align:center;top:512.1px;font-size:11.90px;font-weight:bold">1</span>
<span class="t" style="left:555.4px;top:528.2px;font-size:11.90px;font-weight:bold;">2a</span>
<span class="t" style="left:581.0px;top:528.2px;font-size:11.90px;letter-spacing:0.112px;">Total ordinary dividends</span>
<span class="t" style="left:1113.7px;width:29px;text-align:center;top:528.0px;font-size:11.90px;font-weight:bold">2a</span>
<span class="t" style="left:562.0px;top:544.1px;font-size:11.90px;font-weight:bold;">b</span>
<span class="t" style="left:581.0px;top:544.1px;font-size:11.90px;letter-spacing:-0.347px;">Qualified dividends allocable to:</span>
<span class="t" style="left:742.5px;top:544.1px;font-size:11.90px;letter-spacing:-.68px">(<b>1</b>) Beneficiaries</span>
<span class="t" style="left:923.6px;top:544.1px;font-size:11.90px;letter-spacing:-.47px">(<b>2</b>) Estate or trust</span>
<span class="t" style="left:555.4px;top:559.9px;font-size:11.90px;font-weight:bold;">3</span>
<span class="t" style="left:581.0px;top:559.9px;font-size:11.90px;letter-spacing:-0.014px;">Business income or (loss). Attach Schedule C (Form 1040)</span>
<span class="t" style="left:1113.7px;width:29px;text-align:center;top:559.7px;font-size:11.90px;font-weight:bold">3</span>
<span class="t" style="left:555.4px;top:575.8px;font-size:11.90px;font-weight:bold;">4</span>
<span class="t" style="left:581.0px;top:575.8px;font-size:11.90px;letter-spacing:-0.023px;">Capital gain or (loss). Attach Schedule D (Form 1041)</span>
<span class="t" style="left:1113.7px;width:29px;text-align:center;top:575.6px;font-size:11.90px;font-weight:bold">4</span>
<span class="t" style="left:555.4px;top:591.6px;font-size:11.90px;font-weight:bold;">5</span>
<span class="t" style="left:581.0px;top:591.6px;font-size:11.90px;letter-spacing:0.022px;">Rents, royalties, partnerships, other estates and trusts, etc. Attach Schedule E (Form 1040)</span>
<span class="t" style="left:1113.7px;width:29px;text-align:center;top:591.4px;font-size:11.90px;font-weight:bold">5</span>
<span class="t" style="left:555.4px;top:607.5px;font-size:11.90px;font-weight:bold;">6</span>
<span class="t" style="left:581.0px;top:607.5px;font-size:11.90px;letter-spacing:-0.036px;">Farm income or (loss). Attach Schedule F (Form 1040)</span>
<span class="t" style="left:1113.7px;width:29px;text-align:center;top:607.3px;font-size:11.90px;font-weight:bold">6</span>
<span class="t" style="left:555.4px;top:623.4px;font-size:11.90px;font-weight:bold;">7</span>
<span class="t" style="left:581.0px;top:623.4px;font-size:11.90px;letter-spacing:-0.008px;">Ordinary gain or (loss). Attach Form 4797</span>
<span class="t" style="left:1113.7px;width:29px;text-align:center;top:623.2px;font-size:11.90px;font-weight:bold">7</span>
<span class="t" style="left:555.4px;top:639.2px;font-size:11.90px;font-weight:bold;">8</span>
<span class="t" style="left:581.0px;top:639.2px;font-size:11.90px;">Other income. List type and amount</span>
<span class="t" style="left:1113.7px;width:29px;text-align:center;top:639.0px;font-size:11.90px;font-weight:bold">8</span>
<span class="t" style="left:555.4px;top:655.1px;font-size:11.90px;font-weight:bold;">9</span>
<span class="t" style="left:581px;top:655.1px;font-size:11.90px"><b>Total income.</b> Combine lines 1, 2a, and 3 through 8</span>
<span class="t" style="left:1113.7px;width:29px;text-align:center;top:654.9px;font-size:11.90px;font-weight:bold">9</span>
<span class="t" style="left:548.8px;top:670.9px;font-size:11.90px;font-weight:bold;">10</span>
<span class="t" style="left:581.0px;top:670.9px;font-size:11.90px;letter-spacing:0.046px;">Interest. Check if Form 4952 is attached</span>
<span class="t" style="left:1113.7px;width:29px;text-align:center;top:670.7px;font-size:11.90px;font-weight:bold">10</span>
<span class="t" style="left:549.4px;top:686.8px;font-size:11.90px;font-weight:bold;">11</span>
<span class="t" style="left:581.0px;top:686.8px;font-size:11.90px;letter-spacing:0.043px;">Taxes</span>
<span class="t" style="left:1113.7px;width:29px;text-align:center;top:686.6px;font-size:11.90px;font-weight:bold">11</span>
<span class="t" style="left:548.8px;top:702.7px;font-size:11.90px;font-weight:bold;">12</span>
<span class="t" style="left:581.0px;top:702.7px;font-size:11.90px;letter-spacing:0.036px;">Fiduciary fees. If only a portion is deductible under section 67(e), see instructions</span>
<span class="t" style="left:1113.7px;width:29px;text-align:center;top:702.5px;font-size:11.90px;font-weight:bold">12</span>
<span class="t" style="left:548.8px;top:718.5px;font-size:11.90px;font-weight:bold;">13</span>
<span class="t" style="left:581.0px;top:718.5px;font-size:11.90px;letter-spacing:0.027px;">Charitable deduction (from Schedule A, line 7)</span>
<span class="t" style="left:1113.7px;width:29px;text-align:center;top:718.3px;font-size:11.90px;font-weight:bold">13</span>
<span class="t" style="left:548.8px;top:732.2px;font-size:11.90px;font-weight:bold;">14</span>
<span class="t" style="left:581.0px;top:732.2px;font-size:11.90px;letter-spacing:0.140px;">Attorney, accountant, and return preparer fees. If only a portion is deductible under section 67(e),</span>
<span class="t" style="left:581.0px;top:746.9px;font-size:11.90px;letter-spacing:0.077px;">see instructions</span>
<span class="t" style="left:1113.7px;width:29px;text-align:center;top:749.4px;font-size:11.90px;font-weight:bold">14</span>
<span class="t" style="left:527.5px;top:611.5px;font-size:12.3px;font-weight:bold;transform-origin:0 0;transform:rotate(-90deg);letter-spacing:.65px">Income</span>
<span class="t" style="left:527.5px;top:817.5px;font-size:12.3px;font-weight:bold;transform-origin:0 0;transform:rotate(-90deg);letter-spacing:.25px">Deductions</span>
</div>
<div style="left:32px;top:215px;width:169px;height:548px;background:#fff"></div>
<div style="left:32px;top:215px;width:169px;height:49px;background:#fff;border-bottom:1px solid #e9ecf2"></div>
<div style="left:62px;top:215px;width:1px;height:48px;background:#e9ecf2"></div>
<svg style="left:33px;top:231px;width:12px;height:18px" viewBox="0 0 12 18"><path d="M8.900,3.700 L3.300,9.200 L8.900,14.700" fill="none" stroke="#566075" stroke-width="2.100" stroke-linecap="round" stroke-linejoin="round"/></svg>
<svg style="left:86px;top:227px;width:22px;height:24px;overflow:visible" viewBox="86 227 22 24" fill="none" stroke="#3f7be8" stroke-width="1.500" stroke-linejoin="round" stroke-linecap="round"><path d="M95.500,245.700 H89.800 C89.200,245.700 88.800,245.300 88.800,244.700 V231.300 C88.800,230.700 89.200,230.300 89.800,230.300 H99.300 C99.900,230.300 100.300,230.700 100.300,231.300 V238.500"/><path d="M91.600,234.600 H97.300 M91.600,238 H95.300" stroke-width="1.400"/><circle cx="100.800" cy="244.400" r="5" fill="#fff" stroke="none"/><circle cx="100.800" cy="244.400" r="3.900" stroke-width="1.500" stroke-dasharray="1.530 1.530" stroke-linecap="butt"/><circle cx="100.800" cy="244.400" r="2.900" fill="#fff" stroke-width="1.200"/><circle cx="100.800" cy="244.400" r="1.200" stroke-width="1"/></svg>
<span class="t" style="left:109px;top:234.200px;font-size:11.3px;color:#252f44;letter-spacing:-.02px;-webkit-text-stroke:.25px #252f44">Page Settings</span>
<div style="left:185px;top:264px;width:16px;height:499px;background:#f1f1f1"></div>
<div style="left:186.500px;top:281px;width:12.500px;height:367.500px;background:#c1c1c1"></div>
<svg style="left:185px;top:264px;width:16px;height:499px" viewBox="185 264 16 499"><path d="M189.200,275.700 L192.700,271.800 L196.200,275.700 Z" fill="#a3a3a3"/><path d="M189.200,756.800 L192.700,760.800 L196.200,756.800 Z" fill="#505050"/></svg>
<div style="left:40px;top:288.500px;width:120.500px;height:142.500px;border-radius:3px;background:#fff"></div>
<svg style="left:38px;top:286px;width:126px;height:148px" viewBox="38 286 126 148"><rect x="40.300" y="288.500" width="119.800" height="142.300" rx="2.500" fill="none" stroke="#4a89f5" stroke-width="1.600"/></svg>
<div style="left:40px;top:475.200px;width:120.500px;height:142px;border-radius:2px;background:#fff;box-shadow:0 0 3px rgba(30,40,70,.13)"></div>
<div style="left:40px;top:662.300px;width:120.500px;height:142px;border-radius:2px;background:#fff;box-shadow:0 0 3px rgba(30,40,70,.13)"></div>
<span class="t" style="left:80px;width:40px;text-align:center;top:442.200px;font-size:14px;color:#4a5468">1</span>
<span class="t" style="left:80px;width:40px;text-align:center;top:629.300px;font-size:14px;color:#4a5468">2</span>
<svg style="left:0;top:0;width:1600px;height:860px" viewBox="0 0 1600 860" fill="none"><defs><filter id="bl" x="-5%" y="-5%" width="110%" height="110%"><feGaussianBlur stdDeviation=".35"/></filter></defs><g filter="url(#bl)">
<rect x="50.4" y="296.0" width="7.0" height="2.6" fill="#111" opacity="1.00"/>
<rect x="61.4" y="295.8" width="38.0" height="1.1" fill="#333" opacity="0.80"/>
<rect x="61.4" y="297.1" width="46.0" height="1.3" fill="#111" opacity="1.00"/>
<rect x="118.4" y="296.0" width="10.0" height="2.4" fill="#444" opacity="0.80"/>
<rect x="134.4" y="296.5" width="14.0" height="1.0" fill="#222" opacity="0.70"/>
<path d="M48.4,299.5 L152.4,299.5" stroke="#111" stroke-width="0.80" opacity="1.00"/>
<rect x="48.4" y="301.0" width="1.3" height="1.3" fill="#444" opacity="0.90"/>
<rect x="50.4" y="301.2" width="9.9" height="1.0" fill="#222" opacity="0.80"/>
<rect x="48.4" y="303.1" width="1.3" height="1.3" fill="#444" opacity="0.90"/>
<rect x="50.4" y="303.2" width="8.9" height="1.0" fill="#222" opacity="0.80"/>
<rect x="48.4" y="305.1" width="1.3" height="1.3" fill="#444" opacity="0.90"/>
<rect x="50.4" y="305.3" width="11.9" height="1.0" fill="#222" opacity="0.80"/>
<rect x="48.4" y="307.1" width="1.3" height="1.3" fill="#444" opacity="0.90"/>
<rect x="50.4" y="307.4" width="8.4" height="1.0" fill="#222" opacity="0.80"/>
<rect x="48.4" y="309.2" width="1.3" height="1.3" fill="#444" opacity="0.90"/>
<rect x="50.4" y="309.4" width="11.2" height="1.0" fill="#222" opacity="0.80"/>
<rect x="48.4" y="311.2" width="1.3" height="1.3" fill="#444" opacity="0.90"/>
<rect x="50.4" y="311.4" width="10.2" height="1.0" fill="#222" opacity="0.80"/>
<rect x="48.4" y="313.3" width="1.3" height="1.3" fill="#444" opacity="0.90"/>
<rect x="50.4" y="313.5" width="8.3" height="1.0" fill="#222" opacity="0.80"/>
<rect x="48.4" y="315.4" width="1.3" height="1.3" fill="#444" opacity="0.90"/>
<rect x="50.4" y="315.6" width="11.0" height="1.0" fill="#222" opacity="0.80"/>
<rect x="48.4" y="317.4" width="1.3" height="1.3" fill="#444" opacity="0.90"/>
<rect x="50.4" y="317.6" width="8.2" height="1.0" fill="#222" opacity="0.80"/>
<path d="M65.4,299.5 L65.4,320.5" stroke="#222" stroke-width="0.50" opacity="1.00"/>
<path d="M65.4,301.5 L152.4,301.5" stroke="#333" stroke-width="0.45" opacity="0.90"/>
<rect x="66.4" y="300.1" width="35.8" height="0.8" fill="#222" opacity="0.70"/>
<path d="M65.4,306.3 L152.4,306.3" stroke="#333" stroke-width="0.45" opacity="0.90"/>
<rect x="66.4" y="304.7" width="26.7" height="0.8" fill="#222" opacity="0.70"/>
<path d="M65.4,311.1 L152.4,311.1" stroke="#333" stroke-width="0.45" opacity="0.90"/>
<rect x="66.4" y="309.5" width="27.3" height="0.8" fill="#222" opacity="0.70"/>
<path d="M65.4,315.9 L152.4,315.9" stroke="#333" stroke-width="0.45" opacity="0.90"/>
<rect x="66.4" y="314.3" width="35.6" height="0.8" fill="#222" opacity="0.70"/>
<path d="M124.4,301.5 L124.4,320.5" stroke="#222" stroke-width="0.50" opacity="1.00"/>
<rect x="126.4" y="302.3" width="22.0" height="0.9" fill="#222" opacity="0.90"/>
<rect x="126.4" y="307.0" width="14.0" height="0.8" fill="#222" opacity="0.75"/>
<rect x="126.4" y="311.5" width="25.0" height="0.8" fill="#222" opacity="0.75"/>
<rect x="126.4" y="313.0" width="20.0" height="0.8" fill="#222" opacity="0.70"/>
<rect x="126.4" y="316.0" width="25.0" height="0.8" fill="#222" opacity="0.70"/>
<rect x="126.4" y="318.0" width="18.0" height="0.8" fill="#222" opacity="0.70"/>
<path d="M48.4,320.5 L152.4,320.5" stroke="#222" stroke-width="0.50" opacity="1.00"/>
<rect x="50.4" y="321.3" width="12.0" height="0.8" fill="#222" opacity="0.75"/>
<rect x="50.4" y="322.7" width="9.0" height="0.8" fill="#222" opacity="0.75"/>
<rect x="67.4" y="321.5" width="5.0" height="1.6" fill="#444" opacity="0.80"/>
<rect x="75.4" y="321.3" width="14.1" height="0.8" fill="#222" opacity="0.75"/>
<rect x="75.4" y="323.1" width="11.7" height="0.8" fill="#222" opacity="0.75"/>
<rect x="93.4" y="321.3" width="11.1" height="0.8" fill="#222" opacity="0.75"/>
<rect x="93.4" y="323.1" width="14.8" height="0.8" fill="#222" opacity="0.75"/>
<rect x="109.4" y="321.3" width="14.7" height="0.8" fill="#222" opacity="0.75"/>
<rect x="109.4" y="323.1" width="14.5" height="0.8" fill="#222" opacity="0.75"/>
<rect x="128.4" y="321.3" width="12.0" height="0.8" fill="#222" opacity="0.75"/>
<rect x="128.4" y="323.1" width="16.9" height="0.8" fill="#222" opacity="0.75"/>
<path d="M48.4,325.2 L152.4,325.2" stroke="#222" stroke-width="0.50" opacity="1.00"/>
<rect x="49.4" y="326.0" width="45.0" height="0.8" fill="#222" opacity="0.75"/>
<rect x="114.4" y="326.0" width="8.0" height="0.8" fill="#222" opacity="0.75"/>
<path d="M48.4,327.5 L152.4,327.5" stroke="#111" stroke-width="0.80" opacity="1.00"/>
<rect x="53.4" y="328.2" width="1.6" height="1.0" fill="#222" opacity="0.90"/>
<path d="M57.4,328.62 H83.4" stroke="#222" stroke-width="1.15" opacity="0.80" stroke-dasharray="3.8 0.6 1.6 0.5 2.1 0.8 1.7 0.7 3.1 0.6 2.8 0.5 1.4 0.5 3.2 0.6 2.1 0.7"/>
<rect x="84.4" y="328.9" width="0.4" height="0.4" fill="#222" opacity="0.70"/>
<rect x="87.4" y="328.9" width="0.4" height="0.4" fill="#222" opacity="0.70"/>
<rect x="90.4" y="328.9" width="0.4" height="0.4" fill="#222" opacity="0.70"/>
<rect x="93.4" y="328.9" width="0.4" height="0.4" fill="#222" opacity="0.70"/>
<rect x="96.4" y="328.9" width="0.4" height="0.4" fill="#222" opacity="0.70"/>
<rect x="99.4" y="328.9" width="0.4" height="0.4" fill="#222" opacity="0.70"/>
<rect x="102.4" y="328.9" width="0.4" height="0.4" fill="#222" opacity="0.70"/>
<rect x="105.4" y="328.9" width="0.4" height="0.4" fill="#222" opacity="0.70"/>
<rect x="108.4" y="328.9" width="0.4" height="0.4" fill="#222" opacity="0.70"/>
<rect x="111.4" y="328.9" width="0.4" height="0.4" fill="#222" opacity="0.70"/>
<rect x="114.4" y="328.9" width="0.4" height="0.4" fill="#222" opacity="0.70"/>
<rect x="117.4" y="328.9" width="0.4" height="0.4" fill="#222" opacity="0.70"/>
<rect x="120.4" y="328.9" width="0.4" height="0.4" fill="#222" opacity="0.70"/>
<rect x="123.9" y="328.0" width="2.2" height="1.2" fill="#222" opacity="0.90"/>
<path d="M123.4,329.6 L152.4,329.6" stroke="#111" stroke-width="0.55" opacity="0.90"/>
<rect x="53.4" y="330.4" width="1.6" height="1.0" fill="#222" opacity="0.90"/>
<path d="M57.4,330.77 H94.0" stroke="#222" stroke-width="1.15" opacity="0.80" stroke-dasharray="3.6 0.8 1.9 0.7 2.8 0.8 3.4 0.6 4.1 0.5 2.5 0.8 1.7 0.7 1.3 0.8 3.5 0.7 3.8 0.6 3.3 0.7"/>
<rect x="95.4" y="331.1" width="0.4" height="0.4" fill="#222" opacity="0.70"/>
<rect x="98.4" y="331.1" width="0.4" height="0.4" fill="#222" opacity="0.70"/>
<rect x="101.4" y="331.1" width="0.4" height="0.4" fill="#222" opacity="0.70"/>
<rect x="104.4" y="331.1" width="0.4" height="0.4" fill="#222" opacity="0.70"/>
<rect x="107.4" y="331.1" width="0.4" height="0.4" fill="#222" opacity="0.70"/>
<rect x="110.4" y="331.1" width="0.4" height="0.4" fill="#222" opacity="0.70"/>
<rect x="113.4" y="331.1" width="0.4" height="0.4" fill="#222" opacity="0.70"/>
<rect x="116.4" y="331.1" width="0.4" height="0.4" fill="#222" opacity="0.70"/>
<rect x="119.4" y="331.1" width="0.4" height="0.4" fill="#222" opacity="0.70"/>
<rect x="123.9" y="330.1" width="2.2" height="1.2" fill="#222" opacity="0.90"/>
<path d="M123.4,331.8 L152.4,331.8" stroke="#111" stroke-width="0.55" opacity="0.90"/>
<rect x="53.4" y="332.5" width="1.6" height="1.0" fill="#222" opacity="0.90"/>
<path d="M57.4,332.93 H100.6" stroke="#222" stroke-width="1.15" opacity="0.80" stroke-dasharray="3.7 0.9 2.6 0.7 1.4 0.8 3.1 0.9 3.7 0.6 2.4 0.8 1.3 0.7 1.7 0.5 1.4 0.8 1.6 0.6 2.4 0.8 1.4 0.7 2.8 0.8 3.7 0.8"/>
<rect x="102.4" y="333.2" width="0.4" height="0.4" fill="#222" opacity="0.70"/>
<rect x="105.4" y="333.2" width="0.4" height="0.4" fill="#222" opacity="0.70"/>
<rect x="108.4" y="333.2" width="0.4" height="0.4" fill="#222" opacity="0.70"/>
<rect x="111.4" y="333.2" width="0.4" height="0.4" fill="#222" opacity="0.70"/>
<rect x="114.4" y="333.2" width="0.4" height="0.4" fill="#222" opacity="0.70"/>
<rect x="117.4" y="333.2" width="0.4" height="0.4" fill="#222" opacity="0.70"/>
<rect x="120.4" y="333.2" width="0.4" height="0.4" fill="#222" opacity="0.70"/>
<rect x="123.9" y="332.3" width="2.2" height="1.2" fill="#222" opacity="0.90"/>
<path d="M123.4,333.9 L152.4,333.9" stroke="#111" stroke-width="0.55" opacity="0.90"/>
<rect x="53.4" y="334.6" width="1.6" height="1.0" fill="#222" opacity="0.90"/>
<path d="M57.4,335.07 H98.8" stroke="#222" stroke-width="1.15" opacity="0.80" stroke-dasharray="2.3 0.8 4.1 0.5 1.7 0.6 1.9 0.7 3.0 0.6 1.2 0.6 2.3 0.7 4.1 0.8 2.7 0.7 3.2 0.5 3.9 0.8 3.8 0.8"/>
<rect x="100.4" y="335.4" width="0.4" height="0.4" fill="#222" opacity="0.70"/>
<rect x="103.4" y="335.4" width="0.4" height="0.4" fill="#222" opacity="0.70"/>
<rect x="106.4" y="335.4" width="0.4" height="0.4" fill="#222" opacity="0.70"/>
<rect x="109.4" y="335.4" width="0.4" height="0.4" fill="#222" opacity="0.70"/>
<rect x="112.4" y="335.4" width="0.4" height="0.4" fill="#222" opacity="0.70"/>
<rect x="115.4" y="335.4" width="0.4" height="0.4" fill="#222" opacity="0.70"/>
<rect x="118.4" y="335.4" width="0.4" height="0.4" fill="#222" opacity="0.70"/>
<rect x="121.4" y="335.4" width="0.4" height="0.4" fill="#222" opacity="0.70"/>
<rect x="123.9" y="334.4" width="2.2" height="1.2" fill="#222" opacity="0.90"/>
<path d="M123.4,336.1 L152.4,336.1" stroke="#111" stroke-width="0.55" opacity="0.90"/>
<rect x="53.4" y="336.8" width="1.6" height="1.0" fill="#222" opacity="0.90"/>
<path d="M57.4,337.22 H98.2" stroke="#222" stroke-width="1.15" opacity="0.80" stroke-dasharray="1.5 0.7 1.4 0.5 1.8 0.5 2.2 0.5 1.2 0.5 1.5 0.6 1.3 0.8 3.0 0.5 2.0 0.6 2.3 0.5 3.7 0.9 2.6 0.7 1.5 0.5 2.2 0.6 3.7 0.5"/>
<rect x="99.4" y="337.5" width="0.4" height="0.4" fill="#222" opacity="0.70"/>
<rect x="102.4" y="337.5" width="0.4" height="0.4" fill="#222" opacity="0.70"/>
<rect x="105.4" y="337.5" width="0.4" height="0.4" fill="#222" opacity="0.70"/>
<rect x="108.4" y="337.5" width="0.4" height="0.4" fill="#222" opacity="0.70"/>
<rect x="111.4" y="337.5" width="0.4" height="0.4" fill="#222" opacity="0.70"/>
<rect x="114.4" y="337.5" width="0.4" height="0.4" fill="#222" opacity="0.70"/>
<rect x="117.4" y="337.5" width="0.4" height="0.4" fill="#222" opacity="0.70"/>
<rect x="120.4" y="337.5" width="0.4" height="0.4" fill="#222" opacity="0.70"/>
<rect x="123.9" y="336.6" width="2.2" height="1.2" fill="#222" opacity="0.90"/>
<path d="M123.4,338.2 L152.4,338.2" stroke="#111" stroke-width="0.55" opacity="0.90"/>
<rect x="53.4" y="338.9" width="1.6" height="1.0" fill="#222" opacity="0.90"/>
<path d="M57.4,339.38 H121.3" stroke="#222" stroke-width="1.15" opacity="0.80" stroke-dasharray="2.8 0.5 2.8 0.5 2.8 0.9 3.8 0.8 2.0 0.6 1.7 0.8 2.8 0.8 2.2 0.6 3.6 0.9 3.8 0.8 3.7 0.8 1.9 0.7 2.3 0.5 1.3 0.6 2.0 0.8 4.1 0.7 4.0 0.9 4.1 0.6"/>
<rect x="123.9" y="338.8" width="2.2" height="1.2" fill="#222" opacity="0.90"/>
<path d="M123.4,340.4 L152.4,340.4" stroke="#111" stroke-width="0.55" opacity="0.90"/>
<rect x="53.4" y="341.1" width="1.6" height="1.0" fill="#222" opacity="0.90"/>
<path d="M57.4,341.52 H90.9" stroke="#222" stroke-width="1.15" opacity="0.80" stroke-dasharray="1.8 0.5 3.1 0.9 3.7 0.7 3.2 0.8 1.5 0.7 3.9 0.8 3.5 0.7 1.7 0.8 2.2 0.8 4.1 0.6"/>
<rect x="92.4" y="341.8" width="0.4" height="0.4" fill="#222" opacity="0.70"/>
<rect x="95.4" y="341.8" width="0.4" height="0.4" fill="#222" opacity="0.70"/>
<rect x="98.4" y="341.8" width="0.4" height="0.4" fill="#222" opacity="0.70"/>
<rect x="101.4" y="341.8" width="0.4" height="0.4" fill="#222" opacity="0.70"/>
<rect x="104.4" y="341.8" width="0.4" height="0.4" fill="#222" opacity="0.70"/>
<rect x="107.4" y="341.8" width="0.4" height="0.4" fill="#222" opacity="0.70"/>
<rect x="110.4" y="341.8" width="0.4" height="0.4" fill="#222" opacity="0.70"/>
<rect x="113.4" y="341.8" width="0.4" height="0.4" fill="#222" opacity="0.70"/>
<rect x="116.4" y="341.8" width="0.4" height="0.4" fill="#222" opacity="0.70"/>
<rect x="119.4" y="341.8" width="0.4" height="0.4" fill="#222" opacity="0.70"/>
<rect x="123.9" y="340.9" width="2.2" height="1.2" fill="#222" opacity="0.90"/>
<path d="M123.4,342.6 L152.4,342.6" stroke="#111" stroke-width="0.55" opacity="0.90"/>
<rect x="53.4" y="343.2" width="1.6" height="1.0" fill="#222" opacity="0.90"/>
<path d="M57.4,343.68 H121.2" stroke="#222" stroke-width="1.15" opacity="0.80" stroke-dasharray="3.4 0.5 1.6 0.5 3.9 0.8 1.6 0.8 4.1 0.7 2.3 0.7 1.6 0.5 4.1 0.7 2.8 0.9 2.5 0.8 3.7 0.5 2.0 0.6 1.9 0.7 2.0 0.6 1.6 0.9 2.3 0.7 3.0 0.9 2.5 0.9 2.7 0.7 2.8 0.5"/>
<rect x="123.9" y="343.1" width="2.2" height="1.2" fill="#222" opacity="0.90"/>
<path d="M123.4,344.7 L152.4,344.7" stroke="#111" stroke-width="0.55" opacity="0.90"/>
<rect x="53.4" y="345.4" width="1.6" height="1.0" fill="#222" opacity="0.90"/>
<path d="M57.4,345.82 H89.1" stroke="#222" stroke-width="1.15" opacity="0.80" stroke-dasharray="1.2 0.8 1.7 0.7 3.4 0.7 2.2 0.7 2.9 0.8 1.5 0.7 1.9 0.6 3.5 0.7 2.9 0.8 3.9 0.6"/>
<rect x="123.9" y="345.2" width="2.2" height="1.2" fill="#222" opacity="0.90"/>
<path d="M123.4,346.9 L152.4,346.9" stroke="#111" stroke-width="0.55" opacity="0.90"/>
<rect x="53.4" y="347.6" width="1.6" height="1.0" fill="#222" opacity="0.90"/>
<path d="M57.4,347.97 H102.6" stroke="#222" stroke-width="1.15" opacity="0.80" stroke-dasharray="2.7 0.8 2.6 0.7 2.6 0.9 3.3 0.8 4.0 0.6 2.9 0.9 3.7 0.5 1.6 0.6 1.4 0.6 1.4 0.8 3.6 0.9 1.7 0.8 3.2 0.5 3.8 0.9"/>
<rect x="104.4" y="348.2" width="0.4" height="0.4" fill="#222" opacity="0.70"/>
<rect x="107.4" y="348.2" width="0.4" height="0.4" fill="#222" opacity="0.70"/>
<rect x="110.4" y="348.2" width="0.4" height="0.4" fill="#222" opacity="0.70"/>
<rect x="113.4" y="348.2" width="0.4" height="0.4" fill="#222" opacity="0.70"/>
<rect x="116.4" y="348.2" width="0.4" height="0.4" fill="#222" opacity="0.70"/>
<rect x="119.4" y="348.2" width="0.4" height="0.4" fill="#222" opacity="0.70"/>
<rect x="123.9" y="347.4" width="2.2" height="1.2" fill="#222" opacity="0.90"/>
<path d="M123.4,349.0 L152.4,349.0" stroke="#111" stroke-width="0.55" opacity="0.90"/>
<path d="M48.4,349.0 L152.4,349.0" stroke="#111" stroke-width="0.60" opacity="1.00"/>
<rect x="48.9" y="335.2" width="1.2" height="6.0" fill="#333" opacity="0.80"/>
<rect x="53.4" y="349.7" width="1.6" height="1.0" fill="#222" opacity="0.90"/>
<path d="M57.4,350.12 H121.4" stroke="#222" stroke-width="1.15" opacity="0.80" stroke-dasharray="2.4 0.7 4.2 0.8 1.7 0.6 2.7 0.6 1.8 0.6 3.4 0.5 2.9 0.6 1.3 0.6 3.1 0.7 1.4 0.9 3.6 0.9 1.5 0.6 1.3 0.8 2.0 0.5 2.5 0.9 3.7 0.6 1.6 0.9 2.9 0.8 1.5 0.5 3.3 0.6 1.4 0.9"/>
<rect x="123.9" y="349.5" width="2.2" height="1.2" fill="#222" opacity="0.90"/>
<path d="M123.4,351.1 L152.4,351.1" stroke="#111" stroke-width="0.55" opacity="0.90"/>
<rect x="53.4" y="351.9" width="1.6" height="1.0" fill="#222" opacity="0.90"/>
<path d="M57.4,352.27 H115.1" stroke="#222" stroke-width="1.15" opacity="0.80" stroke-dasharray="1.5 0.8 1.4 0.8 2.6 0.6 2.9 0.9 2.0 0.5 2.8 0.6 1.5 0.5 1.4 0.5 2.1 0.6 3.5 0.6 2.7 0.5 2.2 0.5 2.0 0.5 3.4 0.7 1.8 0.7 4.0 0.5 3.7 0.6 2.7 0.8 2.4 0.7"/>
<rect x="123.9" y="351.6" width="2.2" height="1.2" fill="#222" opacity="0.90"/>
<path d="M123.4,353.3 L152.4,353.3" stroke="#111" stroke-width="0.55" opacity="0.90"/>
<rect x="53.4" y="354.0" width="1.6" height="1.0" fill="#222" opacity="0.90"/>
<path d="M57.4,354.43 H122.7" stroke="#222" stroke-width="1.15" opacity="0.80" stroke-dasharray="2.2 0.8 3.3 0.7 2.4 0.6 1.4 0.5 1.4 0.8 2.0 0.5 1.5 0.8 3.8 0.8 2.0 0.6 2.1 0.7 1.7 0.7 2.0 0.9 4.1 0.7 1.9 0.9 2.1 0.6 1.2 0.6 2.6 0.7 1.8 0.7 1.2 0.6 1.5 0.6 1.3 0.5 2.1 0.6 3.0 0.7 3.5 0.7"/>
<rect x="123.9" y="353.8" width="2.2" height="1.2" fill="#222" opacity="0.90"/>
<path d="M123.4,355.4 L152.4,355.4" stroke="#111" stroke-width="0.55" opacity="0.90"/>
<rect x="53.4" y="356.1" width="1.6" height="1.0" fill="#222" opacity="0.90"/>
<path d="M57.4,356.57 H118.3" stroke="#222" stroke-width="1.15" opacity="0.80" stroke-dasharray="2.4 0.6 4.2 0.5 3.4 0.7 1.3 0.8 3.9 0.7 3.4 0.8 1.6 0.7 2.7 0.8 3.6 0.8 3.0 0.9 3.2 0.8 1.9 0.5 1.6 0.6 1.5 0.8 2.9 0.7 3.1 0.8 2.7 0.5 3.6 0.8"/>
<rect x="119.4" y="356.9" width="0.4" height="0.4" fill="#222" opacity="0.70"/>
<rect x="123.9" y="355.9" width="2.2" height="1.2" fill="#222" opacity="0.90"/>
<path d="M123.4,357.6 L152.4,357.6" stroke="#111" stroke-width="0.55" opacity="0.90"/>
<rect x="53.4" y="358.3" width="1.6" height="1.0" fill="#222" opacity="0.90"/>
<path d="M57.4,358.72 H103.9" stroke="#222" stroke-width="1.15" opacity="0.80" stroke-dasharray="3.2 0.5 3.4 0.6 1.4 0.6 3.4 0.5 3.4 0.9 2.7 0.6 2.6 0.8 3.5 0.7 3.1 0.5 1.6 0.6 3.4 0.6 2.9 0.5 1.4 0.6 3.2 0.8"/>
<rect x="123.9" y="358.1" width="2.2" height="1.2" fill="#222" opacity="0.90"/>
<path d="M123.4,359.8 L152.4,359.8" stroke="#111" stroke-width="0.55" opacity="0.90"/>
<rect x="53.4" y="360.4" width="1.6" height="1.0" fill="#222" opacity="0.90"/>
<path d="M57.4,360.88 H93.6" stroke="#222" stroke-width="1.15" opacity="0.80" stroke-dasharray="2.7 0.7 2.6 0.5 3.9 0.5 4.1 0.9 1.3 0.7 3.7 0.9 2.5 0.6 1.8 0.9 1.8 0.7 1.6 0.7 4.1 0.5"/>
<rect x="123.9" y="360.2" width="2.2" height="1.2" fill="#222" opacity="0.90"/>
<path d="M123.4,361.9 L152.4,361.9" stroke="#111" stroke-width="0.55" opacity="0.90"/>
<rect x="53.4" y="362.6" width="1.6" height="1.0" fill="#222" opacity="0.90"/>
<path d="M57.4,363.02 H102.8" stroke="#222" stroke-width="1.15" opacity="0.80" stroke-dasharray="3.9 0.8 1.9 0.9 2.7 0.5 1.2 0.7 2.6 0.6 1.6 0.6 2.1 0.8 1.2 0.8 3.7 0.5 4.0 0.8 3.9 0.6 2.3 0.6 4.2 0.7 2.3 0.6"/>
<rect x="104.4" y="363.3" width="0.4" height="0.4" fill="#222" opacity="0.70"/>
<rect x="107.4" y="363.3" width="0.4" height="0.4" fill="#222" opacity="0.70"/>
<rect x="110.4" y="363.3" width="0.4" height="0.4" fill="#222" opacity="0.70"/>
<rect x="113.4" y="363.3" width="0.4" height="0.4" fill="#222" opacity="0.70"/>
<rect x="116.4" y="363.3" width="0.4" height="0.4" fill="#222" opacity="0.70"/>
<rect x="119.4" y="363.3" width="0.4" height="0.4" fill="#222" opacity="0.70"/>
<rect x="123.9" y="362.4" width="2.2" height="1.2" fill="#222" opacity="0.90"/>
<path d="M123.4,364.1 L152.4,364.1" stroke="#111" stroke-width="0.55" opacity="0.90"/>
<rect x="53.4" y="364.8" width="1.6" height="1.0" fill="#222" opacity="0.90"/>
<path d="M57.4,365.18 H83.4" stroke="#222" stroke-width="1.15" opacity="0.80" stroke-dasharray="1.5 0.8 2.1 0.9 1.9 0.6 2.7 0.5 2.3 0.9 3.9 0.8 3.1 0.9 4.0 0.7"/>
<rect x="123.9" y="364.6" width="2.2" height="1.2" fill="#222" opacity="0.90"/>
<path d="M123.4,366.2 L152.4,366.2" stroke="#111" stroke-width="0.55" opacity="0.90"/>
<rect x="53.4" y="366.9" width="1.6" height="1.0" fill="#222" opacity="0.90"/>
<path d="M57.4,367.32 H83.5" stroke="#222" stroke-width="1.15" opacity="0.80" stroke-dasharray="3.4 0.7 3.5 0.7 2.1 0.5 4.0 0.5 2.6 0.6 2.1 0.8 4.1 0.6 3.2 0.6"/>
<rect x="85.4" y="367.6" width="0.4" height="0.4" fill="#222" opacity="0.70"/>
<rect x="88.4" y="367.6" width="0.4" height="0.4" fill="#222" opacity="0.70"/>
<rect x="91.4" y="367.6" width="0.4" height="0.4" fill="#222" opacity="0.70"/>
<rect x="94.4" y="367.6" width="0.4" height="0.4" fill="#222" opacity="0.70"/>
<rect x="97.4" y="367.6" width="0.4" height="0.4" fill="#222" opacity="0.70"/>
<rect x="100.4" y="367.6" width="0.4" height="0.4" fill="#222" opacity="0.70"/>
<rect x="103.4" y="367.6" width="0.4" height="0.4" fill="#222" opacity="0.70"/>
<rect x="106.4" y="367.6" width="0.4" height="0.4" fill="#222" opacity="0.70"/>
<rect x="109.4" y="367.6" width="0.4" height="0.4" fill="#222" opacity="0.70"/>
<rect x="112.4" y="367.6" width="0.4" height="0.4" fill="#222" opacity="0.70"/>
<rect x="115.4" y="367.6" width="0.4" height="0.4" fill="#222" opacity="0.70"/>
<rect x="118.4" y="367.6" width="0.4" height="0.4" fill="#222" opacity="0.70"/>
<rect x="121.4" y="367.6" width="0.4" height="0.4" fill="#222" opacity="0.70"/>
<rect x="123.9" y="366.7" width="2.2" height="1.2" fill="#222" opacity="0.90"/>
<path d="M123.4,368.4 L152.4,368.4" stroke="#111" stroke-width="0.55" opacity="0.90"/>
<rect x="53.4" y="369.1" width="1.6" height="1.0" fill="#222" opacity="0.90"/>
<path d="M57.4,369.47 H98.0" stroke="#222" stroke-width="1.15" opacity="0.80" stroke-dasharray="1.7 0.5 1.8 0.9 2.7 0.5 3.9 0.9 2.5 0.5 1.8 0.5 2.2 0.5 1.9 0.6 2.9 0.8 3.4 0.6 2.4 0.7 2.3 0.6 1.4 0.6 4.1 0.5"/>
<rect x="99.4" y="369.8" width="0.4" height="0.4" fill="#222" opacity="0.70"/>
<rect x="102.4" y="369.8" width="0.4" height="0.4" fill="#222" opacity="0.70"/>
<rect x="105.4" y="369.8" width="0.4" height="0.4" fill="#222" opacity="0.70"/>
<rect x="108.4" y="369.8" width="0.4" height="0.4" fill="#222" opacity="0.70"/>
<rect x="111.4" y="369.8" width="0.4" height="0.4" fill="#222" opacity="0.70"/>
<rect x="114.4" y="369.8" width="0.4" height="0.4" fill="#222" opacity="0.70"/>
<rect x="117.4" y="369.8" width="0.4" height="0.4" fill="#222" opacity="0.70"/>
<rect x="120.4" y="369.8" width="0.4" height="0.4" fill="#222" opacity="0.70"/>
<rect x="123.9" y="368.9" width="2.2" height="1.2" fill="#222" opacity="0.90"/>
<path d="M123.4,370.5 L152.4,370.5" stroke="#111" stroke-width="0.55" opacity="0.90"/>
<rect x="53.4" y="371.2" width="1.6" height="1.0" fill="#222" opacity="0.90"/>
<path d="M57.4,371.62 H107.8" stroke="#222" stroke-width="1.15" opacity="0.80" stroke-dasharray="3.8 0.5 2.0 0.6 2.4 0.7 4.1 0.8 3.8 0.5 1.3 0.8 3.9 0.7 3.0 0.5 2.4 0.9 3.7 0.8 4.1 0.6 1.5 0.5 2.8 0.8 4.0 0.8"/>
<rect x="123.9" y="371.0" width="2.2" height="1.2" fill="#222" opacity="0.90"/>
<path d="M123.4,372.6 L152.4,372.6" stroke="#111" stroke-width="0.55" opacity="0.90"/>
<rect x="53.4" y="373.4" width="1.6" height="1.0" fill="#222" opacity="0.90"/>
<path d="M57.4,373.77 H113.5" stroke="#222" stroke-width="1.15" opacity="0.80" stroke-dasharray="2.6 0.7 1.3 0.8 1.9 0.9 3.1 0.6 1.6 0.6 3.1 0.8 1.5 0.5 2.8 0.7 2.4 0.6 3.0 0.5 2.1 0.7 4.1 0.7 3.9 0.7 1.9 0.6 4.1 0.8 2.1 0.5 2.7 0.8 2.5 0.6"/>
<rect x="123.9" y="373.1" width="2.2" height="1.2" fill="#222" opacity="0.90"/>
<path d="M123.4,374.8 L152.4,374.8" stroke="#111" stroke-width="0.55" opacity="0.90"/>
<rect x="53.4" y="375.5" width="1.6" height="1.0" fill="#222" opacity="0.90"/>
<path d="M57.4,375.93 H120.3" stroke="#222" stroke-width="1.15" opacity="0.80" stroke-dasharray="1.9 0.5 2.2 0.6 3.2 0.5 3.6 0.8 2.7 0.5 4.1 0.6 3.7 0.6 1.9 0.8 2.1 0.9 2.7 0.5 1.9 0.6 3.2 0.9 1.6 0.6 1.8 0.9 1.6 0.5 1.4 0.6 3.9 0.8 3.4 0.9 4.0 0.6"/>
<rect x="121.4" y="376.2" width="0.4" height="0.4" fill="#222" opacity="0.70"/>
<rect x="123.9" y="375.3" width="2.2" height="1.2" fill="#222" opacity="0.90"/>
<path d="M123.4,376.9 L152.4,376.9" stroke="#111" stroke-width="0.55" opacity="0.90"/>
<rect x="53.4" y="377.6" width="1.6" height="1.0" fill="#222" opacity="0.90"/>
<path d="M57.4,378.07 H120.7" stroke="#222" stroke-width="1.15" opacity="0.80" stroke-dasharray="3.4 0.5 3.2 0.6 2.3 0.6 1.7 0.5 2.0 0.6 4.1 0.5 4.1 0.5 2.3 0.8 3.7 0.6 1.3 0.7 2.3 0.9 1.8 0.6 3.9 0.5 2.4 0.8 3.5 0.5 1.3 0.5 4.0 0.6 3.4 0.9 2.2 0.6"/>
<rect x="123.9" y="377.4" width="2.2" height="1.2" fill="#222" opacity="0.90"/>
<path d="M123.4,379.1 L152.4,379.1" stroke="#111" stroke-width="0.55" opacity="0.90"/>
<rect x="53.4" y="379.8" width="1.6" height="1.0" fill="#222" opacity="0.90"/>
<path d="M57.4,380.22 H107.3" stroke="#222" stroke-width="1.15" opacity="0.80" stroke-dasharray="2.0 0.8 2.1 0.6 1.2 0.8 3.9 0.7 4.0 0.5 1.9 0.7 4.1 0.9 2.4 0.6 2.5 0.7 4.0 0.5 3.6 0.8 3.7 0.8 3.0 0.6 2.2 0.6"/>
<rect x="123.9" y="379.6" width="2.2" height="1.2" fill="#222" opacity="0.90"/>
<path d="M123.4,381.2 L152.4,381.2" stroke="#111" stroke-width="0.55" opacity="0.90"/>
<path d="M48.4,381.2 L152.4,381.2" stroke="#111" stroke-width="0.60" opacity="1.00"/>
<rect x="48.9" y="362.1" width="1.2" height="6.0" fill="#333" opacity="0.80"/>
<rect x="53.4" y="381.9" width="1.6" height="1.0" fill="#222" opacity="0.90"/>
<path d="M57.4,382.38 H84.7" stroke="#222" stroke-width="1.15" opacity="0.80" stroke-dasharray="1.8 0.8 1.9 0.5 1.3 0.7 2.2 0.9 3.9 0.9 2.0 0.5 1.5 0.7 3.3 0.7 1.9 0.6 3.1 0.8"/>
<rect x="123.9" y="381.8" width="2.2" height="1.2" fill="#222" opacity="0.90"/>
<path d="M123.4,383.4 L152.4,383.4" stroke="#111" stroke-width="0.55" opacity="0.90"/>
<rect x="53.4" y="384.1" width="1.6" height="1.0" fill="#222" opacity="0.90"/>
<path d="M57.4,384.52 H117.0" stroke="#222" stroke-width="1.15" opacity="0.80" stroke-dasharray="3.2 0.5 3.7 0.6 2.9 0.6 3.4 0.5 1.9 0.6 1.7 0.8 2.9 0.6 2.4 0.9 2.7 0.6 3.6 0.7 4.2 0.5 2.6 0.8 3.7 0.9 1.3 0.6 1.6 0.5 4.1 0.7 4.0 0.6"/>
<rect x="123.9" y="383.9" width="2.2" height="1.2" fill="#222" opacity="0.90"/>
<path d="M123.4,385.6 L152.4,385.6" stroke="#111" stroke-width="0.55" opacity="0.90"/>
<rect x="53.4" y="386.2" width="1.6" height="1.0" fill="#222" opacity="0.90"/>
<path d="M57.4,386.68 H100.3" stroke="#222" stroke-width="1.15" opacity="0.80" stroke-dasharray="2.0 0.8 4.0 0.5 3.0 0.7 1.9 0.6 1.6 0.5 2.0 0.7 3.2 0.5 1.2 0.6 3.2 0.5 2.1 0.5 3.6 0.7 1.4 0.5 2.4 0.7 3.1 0.5"/>
<rect x="101.4" y="386.9" width="0.4" height="0.4" fill="#222" opacity="0.70"/>
<rect x="104.4" y="386.9" width="0.4" height="0.4" fill="#222" opacity="0.70"/>
<rect x="107.4" y="386.9" width="0.4" height="0.4" fill="#222" opacity="0.70"/>
<rect x="110.4" y="386.9" width="0.4" height="0.4" fill="#222" opacity="0.70"/>
<rect x="113.4" y="386.9" width="0.4" height="0.4" fill="#222" opacity="0.70"/>
<rect x="116.4" y="386.9" width="0.4" height="0.4" fill="#222" opacity="0.70"/>
<rect x="119.4" y="386.9" width="0.4" height="0.4" fill="#222" opacity="0.70"/>
<rect x="123.9" y="386.1" width="2.2" height="1.2" fill="#222" opacity="0.90"/>
<path d="M123.4,387.7 L152.4,387.7" stroke="#111" stroke-width="0.55" opacity="0.90"/>
<rect x="53.4" y="388.4" width="1.6" height="1.0" fill="#222" opacity="0.90"/>
<path d="M57.4,388.82 H110.6" stroke="#222" stroke-width="1.15" opacity="0.80" stroke-dasharray="2.4 0.6 2.1 0.9 2.1 0.7 2.3 0.6 3.8 0.9 2.3 0.5 3.4 0.5 1.2 0.9 2.5 0.8 2.4 0.8 2.6 0.5 1.2 0.7 3.1 0.9 1.5 0.7 2.3 0.7 1.6 0.6 2.8 0.9 1.5 0.7"/>
<rect x="123.9" y="388.2" width="2.2" height="1.2" fill="#222" opacity="0.90"/>
<path d="M123.4,389.9 L152.4,389.9" stroke="#111" stroke-width="0.55" opacity="0.90"/>
<rect x="53.4" y="390.6" width="1.6" height="1.0" fill="#222" opacity="0.90"/>
<path d="M57.4,390.97 H122.0" stroke="#222" stroke-width="1.15" opacity="0.80" stroke-dasharray="1.8 0.5 4.0 0.9 2.6 0.5 4.0 0.6 3.9 0.7 3.7 0.5 3.6 0.5 2.4 0.8 3.7 0.5 1.9 0.6 2.8 0.6 1.6 0.6 3.4 0.9 1.3 0.7 3.5 0.5 3.7 0.5 3.0 0.7 3.1 0.6"/>
<rect x="123.9" y="390.4" width="2.2" height="1.2" fill="#222" opacity="0.90"/>
<path d="M123.4,392.0 L152.4,392.0" stroke="#111" stroke-width="0.55" opacity="0.90"/>
<rect x="53.4" y="392.7" width="1.6" height="1.0" fill="#222" opacity="0.90"/>
<path d="M57.4,393.12 H105.9" stroke="#222" stroke-width="1.15" opacity="0.80" stroke-dasharray="2.5 0.7 2.5 0.6 1.3 0.7 2.7 0.6 3.5 0.8 2.6 0.5 2.6 0.5 1.6 0.6 1.5 0.6 2.7 0.5 3.1 0.5 3.4 0.8 2.7 0.5 2.7 0.6 4.1 0.5"/>
<rect x="123.9" y="392.5" width="2.2" height="1.2" fill="#222" opacity="0.90"/>
<path d="M123.4,394.1 L152.4,394.1" stroke="#111" stroke-width="0.55" opacity="0.90"/>
<rect x="53.4" y="394.9" width="1.6" height="1.0" fill="#222" opacity="0.90"/>
<path d="M57.4,395.27 H123.2" stroke="#222" stroke-width="1.15" opacity="0.80" stroke-dasharray="3.4 0.8 1.8 0.9 2.7 0.9 3.9 0.5 3.6 0.9 1.4 0.6 3.5 0.5 3.9 0.6 3.6 0.5 2.7 0.9 1.8 0.6 2.7 0.6 1.3 0.5 1.7 0.9 3.2 0.9 1.7 0.8 1.5 0.7 3.1 0.6 3.8 0.7 2.9 0.8"/>
<rect x="123.9" y="394.6" width="2.2" height="1.2" fill="#222" opacity="0.90"/>
<path d="M123.4,396.3 L152.4,396.3" stroke="#111" stroke-width="0.55" opacity="0.90"/>
<rect x="53.4" y="397.0" width="1.6" height="1.0" fill="#222" opacity="0.90"/>
<path d="M57.4,397.43 H123.1" stroke="#222" stroke-width="1.15" opacity="0.80" stroke-dasharray="3.1 0.6 3.6 0.6 4.2 0.7 2.3 0.8 2.5 0.5 3.4 0.5 3.7 0.6 3.1 0.9 3.0 0.7 2.1 0.5 1.3 0.5 3.0 0.6 2.7 0.9 1.6 0.6 3.2 0.5 1.2 0.6 1.5 0.6 1.9 0.7 3.0 0.5 3.1 0.7"/>
<rect x="123.9" y="396.8" width="2.2" height="1.2" fill="#222" opacity="0.90"/>
<path d="M123.4,398.4 L152.4,398.4" stroke="#111" stroke-width="0.55" opacity="0.90"/>
<rect x="53.4" y="399.1" width="1.6" height="1.0" fill="#222" opacity="0.90"/>
<path d="M57.4,399.57 H120.7" stroke="#222" stroke-width="1.15" opacity="0.80" stroke-dasharray="1.9 0.5 1.5 0.7 3.8 0.8 2.4 0.6 1.2 0.7 2.9 0.6 3.1 0.6 4.0 0.8 1.9 0.9 1.3 0.7 2.4 0.6 1.4 0.8 1.2 0.7 4.0 0.5 1.8 0.7 2.7 0.7 3.6 0.5 2.1 0.6 1.3 0.9 3.5 0.8 1.2 0.8"/>
<rect x="123.9" y="398.9" width="2.2" height="1.2" fill="#222" opacity="0.90"/>
<path d="M123.4,400.6 L152.4,400.6" stroke="#111" stroke-width="0.55" opacity="0.90"/>
<rect x="53.4" y="401.3" width="1.6" height="1.0" fill="#222" opacity="0.90"/>
<path d="M57.4,401.72 H100.9" stroke="#222" stroke-width="1.15" opacity="0.80" stroke-dasharray="3.4 0.7 1.9 0.5 1.9 0.5 2.2 0.8 3.3 0.8 3.3 0.6 2.9 0.6 3.6 0.7 2.0 0.7 4.1 0.5 3.8 0.5 2.0 0.6 3.4 0.9"/>
<rect x="123.9" y="401.1" width="2.2" height="1.2" fill="#222" opacity="0.90"/>
<path d="M123.4,402.8 L152.4,402.8" stroke="#111" stroke-width="0.55" opacity="0.90"/>
<path d="M48.4,402.8 L152.4,402.8" stroke="#111" stroke-width="0.60" opacity="1.00"/>
<rect x="48.9" y="389.0" width="1.2" height="6.0" fill="#333" opacity="0.80"/>
<path d="M51.9,327.5 L51.9,402.8" stroke="#222" stroke-width="0.50" opacity="1.00"/>
<path d="M123.4,327.5 L123.4,402.8" stroke="#111" stroke-width="0.60" opacity="1.00"/>
<path d="M127.4,327.5 L127.4,402.8" stroke="#222" stroke-width="0.50" opacity="1.00"/>
<rect x="48.4" y="403.4" width="4.0" height="2.4" fill="#222" opacity="0.90"/>
<rect x="54.4" y="403.4" width="90.0" height="0.7" fill="#222" opacity="0.75"/>
<rect x="54.4" y="404.6" width="70.0" height="0.7" fill="#222" opacity="0.70"/>
<path d="M52.4,407.8 L124.4,407.8" stroke="#222" stroke-width="0.40" opacity="1.00"/>
<rect x="54.4" y="408.1" width="30.0" height="0.7" fill="#222" opacity="0.70"/>
<rect x="126.4" y="405.8" width="24.0" height="3.5" fill="#333" opacity="0.70"/>
<path d="M48.4,409.8 L152.4,409.8" stroke="#111" stroke-width="0.60" opacity="1.00"/>
<rect x="48.4" y="410.4" width="4.0" height="4.0" fill="#222" opacity="0.85"/>
<path d="M54.4,411.9 L152.4,411.9" stroke="#333" stroke-width="0.40" opacity="0.80"/>
<rect x="55.4" y="410.4" width="19.2" height="0.7" fill="#222" opacity="0.70"/>
<rect x="93.4" y="410.4" width="15.0" height="0.7" fill="#222" opacity="0.70"/>
<rect x="120.4" y="410.4" width="10.6" height="0.7" fill="#222" opacity="0.70"/>
<path d="M54.4,414.1 L152.4,414.1" stroke="#333" stroke-width="0.40" opacity="0.80"/>
<rect x="55.4" y="412.6" width="17.8" height="0.7" fill="#222" opacity="0.70"/>
<rect x="93.4" y="412.6" width="15.3" height="0.7" fill="#222" opacity="0.70"/>
<rect x="120.4" y="412.6" width="13.0" height="0.7" fill="#222" opacity="0.70"/>
<path d="M54.4,416.4 L152.4,416.4" stroke="#333" stroke-width="0.40" opacity="0.80"/>
<rect x="55.4" y="414.8" width="25.1" height="0.7" fill="#222" opacity="0.70"/>
<rect x="93.4" y="414.8" width="13.3" height="0.7" fill="#222" opacity="0.70"/>
<rect x="120.4" y="414.8" width="15.8" height="0.7" fill="#222" opacity="0.70"/>
<path d="M48.4,416.8 L152.4,416.8" stroke="#111" stroke-width="0.60" opacity="1.00"/>
<rect x="48.4" y="417.4" width="50.0" height="0.7" fill="#222" opacity="0.75"/>
<rect x="110.4" y="417.4" width="14.0" height="0.7" fill="#222" opacity="0.70"/>
<rect x="136.4" y="417.4" width="14.0" height="0.9" fill="#333" opacity="0.80"/>
<rect x="46.6" y="481.5" width="10.0" height="0.8" fill="#444" opacity="0.70"/>
<rect x="147.6" y="481.5" width="5.0" height="0.8" fill="#333" opacity="0.80"/>
<path d="M46.6,482.8 L153.6,482.8" stroke="#111" stroke-width="0.70" opacity="1.00"/>
<rect x="46.6" y="483.0" width="7.0" height="1.5" fill="#111" opacity="1.00"/>
<rect x="55.6" y="483.2" width="55.8" height="1.1" fill="#222" opacity="0.90"/>
<path d="M46.6,484.8 L153.6,484.8" stroke="#222" stroke-width="0.50" opacity="1.00"/>
<rect x="49.6" y="485.5" width="1.6" height="1.0" fill="#222" opacity="0.85"/>
<path d="M53.6,485.93 H103.5" stroke="#222" stroke-width="1.15" opacity="0.80" stroke-dasharray="4.0 0.7 2.7 0.7 1.8 0.7 3.1 0.8 1.5 0.6 1.5 0.8 3.3 0.5 4.1 0.9 3.2 0.7 1.7 0.5 2.8 0.5 1.8 0.6 1.3 0.7 2.5 0.8 2.8 0.7 2.7 0.7"/>
<rect x="135.1" y="485.3" width="2.0" height="1.2" fill="#222" opacity="0.90"/>
<path d="M134.6,487.1 L153.6,487.1" stroke="#111" stroke-width="0.55" opacity="0.90"/>
<rect x="49.6" y="487.9" width="1.6" height="1.0" fill="#222" opacity="0.85"/>
<path d="M53.6,488.27 H97.7" stroke="#222" stroke-width="1.15" opacity="0.80" stroke-dasharray="2.0 0.9 4.2 0.8 3.3 0.6 1.9 0.6 1.4 0.8 2.4 0.8 2.4 0.9 3.7 0.5 1.8 0.9 2.6 0.9 2.4 0.5 3.1 0.8 2.0 0.5 2.2 0.9"/>
<rect x="135.1" y="487.6" width="2.0" height="1.2" fill="#222" opacity="0.90"/>
<path d="M134.6,489.5 L153.6,489.5" stroke="#111" stroke-width="0.55" opacity="0.90"/>
<rect x="49.6" y="490.2" width="1.6" height="1.0" fill="#222" opacity="0.85"/>
<path d="M53.6,490.62 H114.8" stroke="#222" stroke-width="1.15" opacity="0.80" stroke-dasharray="1.6 0.6 1.5 0.5 3.6 0.5 2.9 0.7 1.8 0.8 1.6 0.7 1.5 0.6 1.8 0.6 4.1 0.8 2.1 0.8 1.8 0.6 3.8 0.7 1.5 0.9 1.8 0.6 3.5 0.6 2.1 0.5 1.5 0.7 1.9 0.7 2.3 0.7 4.1 0.7 2.9 0.8"/>
<rect x="135.1" y="490.0" width="2.0" height="1.2" fill="#222" opacity="0.90"/>
<path d="M134.6,491.9 L153.6,491.9" stroke="#111" stroke-width="0.55" opacity="0.90"/>
<rect x="49.6" y="492.6" width="1.6" height="1.0" fill="#222" opacity="0.85"/>
<path d="M53.6,492.97 H82.0" stroke="#222" stroke-width="1.15" opacity="0.80" stroke-dasharray="1.7 0.9 3.7 0.6 1.8 0.8 4.0 0.5 4.1 0.8 3.0 0.6 1.5 0.5 4.1 0.6"/>
<rect x="135.1" y="492.4" width="2.0" height="1.2" fill="#222" opacity="0.90"/>
<path d="M134.6,494.2 L153.6,494.2" stroke="#111" stroke-width="0.55" opacity="0.90"/>
<rect x="49.6" y="494.9" width="1.6" height="1.0" fill="#222" opacity="0.85"/>
<path d="M53.6,495.32 H111.8" stroke="#222" stroke-width="1.15" opacity="0.80" stroke-dasharray="2.0 0.8 3.0 0.6 1.7 0.8 1.4 0.6 2.9 0.8 3.0 0.6 4.0 0.5 1.2 0.6 2.5 0.5 1.7 0.6 2.9 0.5 2.3 0.9 4.1 0.7 3.3 0.7 1.6 0.5 1.3 0.9 3.3 0.9 1.3 0.7 2.6 0.8"/>
<rect x="135.1" y="494.7" width="2.0" height="1.2" fill="#222" opacity="0.90"/>
<path d="M134.6,496.6 L153.6,496.6" stroke="#111" stroke-width="0.55" opacity="0.90"/>
<rect x="49.6" y="497.2" width="1.6" height="1.0" fill="#222" opacity="0.85"/>
<path d="M53.6,497.68 H89.8" stroke="#222" stroke-width="1.15" opacity="0.80" stroke-dasharray="4.2 0.5 2.8 0.8 3.9 0.8 3.3 0.8 3.9 0.6 3.3 0.9 3.8 0.6 3.6 0.8 2.9 0.7"/>
<rect x="135.1" y="497.1" width="2.0" height="1.2" fill="#222" opacity="0.90"/>
<path d="M134.6,498.9 L153.6,498.9" stroke="#111" stroke-width="0.55" opacity="0.90"/>
<rect x="49.6" y="499.6" width="1.6" height="1.0" fill="#222" opacity="0.85"/>
<path d="M53.6,500.02 H93.4" stroke="#222" stroke-width="1.15" opacity="0.80" stroke-dasharray="2.9 0.7 1.4 0.7 4.2 0.8 3.4 0.6 3.4 0.7 2.5 0.8 1.5 0.8 1.3 0.7 2.6 0.6 3.3 0.7 3.0 0.9 2.0 0.5"/>
<rect x="135.1" y="499.4" width="2.0" height="1.2" fill="#222" opacity="0.90"/>
<path d="M134.6,501.2 L153.6,501.2" stroke="#111" stroke-width="0.55" opacity="0.90"/>
<rect x="49.6" y="501.9" width="1.6" height="1.0" fill="#222" opacity="0.85"/>
<path d="M53.6,502.38 H88.8" stroke="#222" stroke-width="1.15" opacity="0.80" stroke-dasharray="3.2 0.5 1.7 0.9 3.2 0.6 3.9 0.6 3.2 0.5 2.5 0.8 3.9 0.8 2.4 0.7 2.1 0.5 2.7 0.8"/>
<rect x="135.1" y="501.8" width="2.0" height="1.2" fill="#222" opacity="0.90"/>
<path d="M134.6,503.6 L153.6,503.6" stroke="#111" stroke-width="0.55" opacity="0.90"/>
<rect x="49.6" y="504.3" width="1.6" height="1.0" fill="#222" opacity="0.85"/>
<path d="M53.6,504.72 H120.0" stroke="#222" stroke-width="1.15" opacity="0.80" stroke-dasharray="3.3 0.9 2.0 0.5 2.6 0.6 1.8 0.6 3.1 0.7 2.1 0.8 4.1 0.7 1.4 0.5 3.8 0.5 3.3 0.7 2.1 0.8 1.3 0.5 2.6 0.5 3.7 0.6 1.6 0.5 3.1 0.7 3.1 0.7 3.6 0.9 3.3 0.5 2.6 0.5"/>
<rect x="135.1" y="504.1" width="2.0" height="1.2" fill="#222" opacity="0.90"/>
<path d="M134.6,505.9 L153.6,505.9" stroke="#111" stroke-width="0.55" opacity="0.90"/>
<path d="M46.6,506.8 L153.6,506.8" stroke="#111" stroke-width="0.70" opacity="1.00"/>
<rect x="46.6" y="507.0" width="7.0" height="1.5" fill="#111" opacity="1.00"/>
<rect x="55.6" y="507.2" width="40.4" height="1.1" fill="#222" opacity="0.90"/>
<path d="M46.6,508.8 L153.6,508.8" stroke="#222" stroke-width="0.50" opacity="1.00"/>
<rect x="49.6" y="509.5" width="1.6" height="1.0" fill="#222" opacity="0.85"/>
<path d="M53.6,509.93 H98.5" stroke="#222" stroke-width="1.15" opacity="0.80" stroke-dasharray="3.3 0.5 2.0 0.6 3.3 0.7 3.0 0.8 2.4 0.8 3.9 0.5 4.0 0.8 1.6 0.7 3.1 0.9 2.3 0.7 3.8 0.8 4.0 0.7"/>
<rect x="135.1" y="509.3" width="2.0" height="1.2" fill="#222" opacity="0.90"/>
<path d="M134.6,511.1 L153.6,511.1" stroke="#111" stroke-width="0.55" opacity="0.90"/>
<rect x="49.6" y="511.9" width="1.6" height="1.0" fill="#222" opacity="0.85"/>
<path d="M53.6,512.27 H108.7" stroke="#222" stroke-width="1.15" opacity="0.80" stroke-dasharray="1.8 0.8 3.7 0.7 3.4 0.5 3.9 0.9 4.1 0.7 3.6 0.6 3.9 0.8 2.2 0.5 2.5 0.7 3.5 0.7 1.3 0.8 1.4 0.8 1.7 0.6 3.6 0.5 1.6 0.7 3.4 0.8"/>
<rect x="135.1" y="511.6" width="2.0" height="1.2" fill="#222" opacity="0.90"/>
<path d="M134.6,513.5 L153.6,513.5" stroke="#111" stroke-width="0.55" opacity="0.90"/>
<rect x="49.6" y="514.2" width="1.6" height="1.0" fill="#222" opacity="0.85"/>
<path d="M53.6,514.62 H110.9" stroke="#222" stroke-width="1.15" opacity="0.80" stroke-dasharray="4.0 0.7 4.0 0.5 1.9 0.7 2.1 0.8 3.1 0.7 3.7 0.7 2.1 0.6 3.7 0.9 1.8 0.8 4.1 0.7 2.9 0.5 2.8 0.7 3.0 0.5 4.1 0.7 2.4 0.8 2.9 0.7"/>
<rect x="135.1" y="514.0" width="2.0" height="1.2" fill="#222" opacity="0.90"/>
<path d="M134.6,515.9 L153.6,515.9" stroke="#111" stroke-width="0.55" opacity="0.90"/>
<rect x="49.6" y="516.5" width="1.6" height="1.0" fill="#222" opacity="0.85"/>
<path d="M53.6,516.98 H111.0" stroke="#222" stroke-width="1.15" opacity="0.80" stroke-dasharray="1.4 0.7 2.4 0.9 4.0 0.6 2.6 0.5 2.5 0.8 3.9 0.7 2.2 0.5 3.1 0.9 1.6 0.8 1.3 0.5 1.9 0.8 2.2 0.6 3.1 0.5 3.4 0.5 2.7 0.6 1.8 0.7 2.5 0.6 2.4 0.7 1.7 0.5"/>
<rect x="135.1" y="516.4" width="2.0" height="1.2" fill="#222" opacity="0.90"/>
<path d="M134.6,518.2 L153.6,518.2" stroke="#111" stroke-width="0.55" opacity="0.90"/>
<rect x="49.6" y="518.9" width="1.6" height="1.0" fill="#222" opacity="0.85"/>
<path d="M53.6,519.33 H107.6" stroke="#222" stroke-width="1.15" opacity="0.80" stroke-dasharray="3.1 0.7 3.8 0.7 3.8 0.6 3.4 0.8 3.9 0.6 2.1 0.9 1.9 0.9 3.9 0.5 1.9 0.8 2.0 0.5 3.7 0.6 3.6 0.5 2.4 0.8 1.3 0.5 3.2 0.9"/>
<rect x="135.1" y="518.7" width="2.0" height="1.2" fill="#222" opacity="0.90"/>
<path d="M134.6,520.5 L153.6,520.5" stroke="#111" stroke-width="0.55" opacity="0.90"/>
<rect x="49.6" y="521.2" width="1.6" height="1.0" fill="#222" opacity="0.85"/>
<path d="M53.6,521.68 H126.8" stroke="#222" stroke-width="1.15" opacity="0.80" stroke-dasharray="1.5 0.7 3.5 0.7 3.3 0.5 1.4 0.5 1.3 0.7 2.7 0.7 1.6 0.5 1.8 0.8 4.2 0.9 1.5 0.5 4.1 0.7 3.5 0.6 2.6 0.7 2.5 0.7 1.2 0.8 3.7 0.5 2.6 0.8 2.4 0.5 1.7 0.7 1.2 0.9 3.6 0.8 3.8 0.7 2.4 0.7"/>
<rect x="135.1" y="521.0" width="2.0" height="1.2" fill="#222" opacity="0.90"/>
<path d="M134.6,522.9 L153.6,522.9" stroke="#111" stroke-width="0.55" opacity="0.90"/>
<rect x="49.6" y="523.6" width="1.6" height="1.0" fill="#222" opacity="0.85"/>
<path d="M53.6,524.03 H100.3" stroke="#222" stroke-width="1.15" opacity="0.80" stroke-dasharray="4.1 0.8 2.0 0.9 3.4 0.8 3.6 0.6 3.9 0.8 3.3 0.8 3.5 0.6 3.4 0.5 2.2 0.7 1.2 0.6 3.1 0.7 1.9 0.9 3.2 0.6"/>
<rect x="135.1" y="523.4" width="2.0" height="1.2" fill="#222" opacity="0.90"/>
<path d="M134.6,525.2 L153.6,525.2" stroke="#111" stroke-width="0.55" opacity="0.90"/>
<rect x="49.6" y="526.0" width="1.6" height="1.0" fill="#222" opacity="0.85"/>
<path d="M53.6,526.38 H109.2" stroke="#222" stroke-width="1.15" opacity="0.80" stroke-dasharray="2.9 0.7 2.4 0.9 3.1 0.8 3.5 0.9 1.3 0.7 3.4 0.6 2.4 0.5 1.8 0.6 1.5 0.6 3.9 0.7 2.7 0.9 2.9 0.9 3.1 0.8 1.4 0.7 3.5 0.5 4.0 0.5 2.6 0.5"/>
<rect x="135.1" y="525.8" width="2.0" height="1.2" fill="#222" opacity="0.90"/>
<path d="M134.6,527.6 L153.6,527.6" stroke="#111" stroke-width="0.55" opacity="0.90"/>
<rect x="49.6" y="528.3" width="1.6" height="1.0" fill="#222" opacity="0.85"/>
<path d="M53.6,528.73 H99.8" stroke="#222" stroke-width="1.15" opacity="0.80" stroke-dasharray="3.0 0.5 4.0 0.6 2.8 0.7 2.3 0.6 3.2 0.7 2.1 0.8 2.1 0.5 1.9 0.5 1.7 0.8 2.4 0.9 3.4 0.5 4.2 0.9 1.4 0.9 2.5 0.7"/>
<rect x="135.1" y="528.1" width="2.0" height="1.2" fill="#222" opacity="0.90"/>
<path d="M134.6,530.0 L153.6,530.0" stroke="#111" stroke-width="0.55" opacity="0.90"/>
<rect x="49.6" y="530.6" width="1.6" height="1.0" fill="#222" opacity="0.85"/>
<path d="M53.6,531.08 H127.1" stroke="#222" stroke-width="1.15" opacity="0.80" stroke-dasharray="1.9 0.7 4.0 0.8 2.6 0.9 3.7 0.7 1.5 0.7 2.6 0.5 1.4 0.7 1.6 0.6 3.2 0.7 2.0 0.7 2.5 0.8 2.8 0.9 4.1 0.8 1.9 0.5 3.9 0.8 3.1 0.6 2.0 0.8 2.9 0.7 3.1 0.8 1.8 0.6 4.1 0.9 3.8 0.5"/>
<rect x="135.1" y="530.5" width="2.0" height="1.2" fill="#222" opacity="0.90"/>
<path d="M134.6,532.3 L153.6,532.3" stroke="#111" stroke-width="0.55" opacity="0.90"/>
<rect x="49.6" y="533.0" width="1.6" height="1.0" fill="#222" opacity="0.85"/>
<path d="M53.6,533.43 H75.1" stroke="#222" stroke-width="1.15" opacity="0.80" stroke-dasharray="2.0 0.6 3.1 0.5 2.8 0.5 1.5 0.8 2.9 0.7 2.3 0.7 1.8 0.6 3.4 0.8"/>
<rect x="135.1" y="532.8" width="2.0" height="1.2" fill="#222" opacity="0.90"/>
<path d="M134.6,534.6 L153.6,534.6" stroke="#111" stroke-width="0.55" opacity="0.90"/>
<rect x="49.6" y="535.4" width="1.6" height="1.0" fill="#222" opacity="0.85"/>
<path d="M53.6,535.78 H75.8" stroke="#222" stroke-width="1.15" opacity="0.80" stroke-dasharray="1.6 0.8 3.1 0.8 1.8 0.6 2.0 0.8 2.3 0.7 4.2 0.6 2.8 0.8"/>
<rect x="135.1" y="535.1" width="2.0" height="1.2" fill="#222" opacity="0.90"/>
<path d="M134.6,537.0 L153.6,537.0" stroke="#111" stroke-width="0.55" opacity="0.90"/>
<rect x="49.6" y="537.7" width="1.6" height="1.0" fill="#222" opacity="0.85"/>
<path d="M53.6,538.12 H124.1" stroke="#222" stroke-width="1.15" opacity="0.80" stroke-dasharray="2.5 0.6 1.5 0.8 1.4 0.5 2.9 0.7 3.3 0.6 3.5 0.5 1.8 0.7 1.4 0.6 3.4 0.8 2.0 0.5 2.3 0.8 2.3 0.5 3.3 0.7 4.0 0.9 3.9 0.6 3.6 0.6 2.2 0.6 4.0 0.9 1.9 0.6 2.3 0.6 2.4 0.6 1.8 0.7"/>
<rect x="135.1" y="537.5" width="2.0" height="1.2" fill="#222" opacity="0.90"/>
<path d="M134.6,539.4 L153.6,539.4" stroke="#111" stroke-width="0.55" opacity="0.90"/>
<rect x="49.6" y="540.0" width="1.6" height="1.0" fill="#222" opacity="0.85"/>
<path d="M53.6,540.48 H117.0" stroke="#222" stroke-width="1.15" opacity="0.80" stroke-dasharray="2.8 0.8 2.9 0.5 3.5 0.8 2.0 0.5 2.7 0.7 2.9 0.9 3.2 0.8 1.4 0.7 3.6 0.5 1.4 0.8 3.9 0.5 3.1 0.5 3.4 0.7 1.9 0.5 3.5 0.7 3.5 0.6 2.2 0.9 3.2 0.7 2.8 0.8"/>
<rect x="135.1" y="539.9" width="2.0" height="1.2" fill="#222" opacity="0.90"/>
<path d="M134.6,541.7 L153.6,541.7" stroke="#111" stroke-width="0.55" opacity="0.90"/>
<rect x="49.6" y="542.4" width="1.6" height="1.0" fill="#222" opacity="0.85"/>
<path d="M53.6,542.83 H112.0" stroke="#222" stroke-width="1.15" opacity="0.80" stroke-dasharray="3.9 0.6 3.7 0.8 3.8 0.8 3.7 0.8 4.1 0.7 2.8 0.8 3.6 0.6 2.5 0.5 3.4 0.9 2.3 0.5 1.8 0.6 2.1 0.9 1.4 0.6 1.5 0.7 3.5 0.5 1.4 0.7 3.0 0.9"/>
<rect x="135.1" y="542.2" width="2.0" height="1.2" fill="#222" opacity="0.90"/>
<path d="M134.6,544.0 L153.6,544.0" stroke="#111" stroke-width="0.55" opacity="0.90"/>
<path d="M46.6,544.8 L153.6,544.8" stroke="#111" stroke-width="0.70" opacity="1.00"/>
<rect x="46.6" y="545.0" width="7.0" height="1.5" fill="#111" opacity="1.00"/>
<rect x="55.6" y="545.2" width="41.3" height="1.1" fill="#222" opacity="0.90"/>
<path d="M46.6,546.8 L153.6,546.8" stroke="#222" stroke-width="0.50" opacity="1.00"/>
<rect x="49.6" y="547.5" width="1.6" height="1.0" fill="#222" opacity="0.85"/>
<path d="M53.6,547.93 H77.8" stroke="#222" stroke-width="1.15" opacity="0.80" stroke-dasharray="1.8 0.5 1.9 0.8 3.0 0.6 1.8 0.6 1.7 0.8 2.1 0.7 3.7 0.7 2.0 0.8 3.9 0.6"/>
<rect x="135.1" y="547.3" width="2.0" height="1.2" fill="#222" opacity="0.90"/>
<path d="M134.6,549.1 L153.6,549.1" stroke="#111" stroke-width="0.55" opacity="0.90"/>
<rect x="49.6" y="549.9" width="1.6" height="1.0" fill="#222" opacity="0.85"/>
<path d="M53.6,550.28 H102.8" stroke="#222" stroke-width="1.15" opacity="0.80" stroke-dasharray="4.1 0.7 1.9 0.5 4.0 0.8 2.4 0.7 2.7 0.6 4.2 0.7 1.9 0.5 2.6 0.6 3.6 0.8 3.0 0.5 1.7 0.6 2.0 0.8 2.7 0.7 4.2 0.6"/>
<rect x="135.1" y="549.6" width="2.0" height="1.2" fill="#222" opacity="0.90"/>
<path d="M134.6,551.5 L153.6,551.5" stroke="#111" stroke-width="0.55" opacity="0.90"/>
<rect x="49.6" y="552.2" width="1.6" height="1.0" fill="#222" opacity="0.85"/>
<path d="M53.6,552.62 H102.1" stroke="#222" stroke-width="1.15" opacity="0.80" stroke-dasharray="1.7 0.8 1.2 0.8 3.7 0.8 1.4 0.6 3.3 0.5 2.6 0.7 4.1 0.7 3.8 0.6 3.6 0.6 4.0 0.5 3.7 0.5 2.8 0.7 1.7 0.8 2.1 0.6"/>
<rect x="135.1" y="552.0" width="2.0" height="1.2" fill="#222" opacity="0.90"/>
<path d="M134.6,553.9 L153.6,553.9" stroke="#111" stroke-width="0.55" opacity="0.90"/>
<rect x="49.6" y="554.5" width="1.6" height="1.0" fill="#222" opacity="0.85"/>
<path d="M53.6,554.98 H75.9" stroke="#222" stroke-width="1.15" opacity="0.80" stroke-dasharray="2.1 0.7 3.3 0.6 3.3 0.5 2.4 0.7 4.1 0.8 3.2 0.5 2.3 0.8"/>
<rect x="115.6" y="554.2" width="2.6" height="1.5" fill="#333" opacity="0.80"/>
<path d="M115.1,556.2 L124.6,556.2" stroke="#333" stroke-width="0.40" opacity="0.80"/>
<rect x="135.1" y="553.9" width="1.8" height="2.4" fill="#999" opacity="0.80"/>
<path d="M134.6,556.2 L153.6,556.2" stroke="#111" stroke-width="0.55" opacity="0.90"/>
<rect x="49.6" y="556.9" width="1.6" height="1.0" fill="#222" opacity="0.85"/>
<path d="M53.6,557.33 H85.1" stroke="#222" stroke-width="1.15" opacity="0.80" stroke-dasharray="2.9 0.7 1.2 0.9 3.6 0.5 3.0 0.6 2.3 0.7 2.1 0.6 2.4 0.8 2.0 0.5 3.4 0.6 4.0 0.7"/>
<rect x="115.6" y="556.6" width="2.6" height="1.5" fill="#333" opacity="0.80"/>
<path d="M115.1,558.5 L124.6,558.5" stroke="#333" stroke-width="0.40" opacity="0.80"/>
<rect x="135.1" y="556.2" width="1.8" height="2.4" fill="#999" opacity="0.80"/>
<path d="M134.6,558.5 L153.6,558.5" stroke="#111" stroke-width="0.55" opacity="0.90"/>
<rect x="49.6" y="559.2" width="1.6" height="1.0" fill="#222" opacity="0.85"/>
<path d="M53.6,559.68 H112.9" stroke="#222" stroke-width="1.15" opacity="0.80" stroke-dasharray="2.2 0.8 1.5 0.5 1.5 0.8 3.3 0.5 2.4 0.8 3.0 0.5 1.9 0.5 1.6 0.6 1.4 0.9 2.5 0.7 3.1 0.8 3.7 0.6 2.2 0.6 1.2 0.6 3.3 0.9 3.6 0.7 3.0 0.5 2.2 0.6 3.2 0.5 2.3 0.7"/>
<rect x="115.6" y="559.0" width="2.6" height="1.5" fill="#333" opacity="0.80"/>
<path d="M115.1,560.9 L124.6,560.9" stroke="#333" stroke-width="0.40" opacity="0.80"/>
<rect x="135.1" y="558.5" width="1.8" height="2.4" fill="#999" opacity="0.80"/>
<path d="M134.6,560.9 L153.6,560.9" stroke="#111" stroke-width="0.55" opacity="0.90"/>
<rect x="49.6" y="561.6" width="1.6" height="1.0" fill="#222" opacity="0.85"/>
<path d="M53.6,562.03 H116.5" stroke="#222" stroke-width="1.15" opacity="0.80" stroke-dasharray="3.7 0.7 1.7 0.8 3.9 0.7 2.3 0.7 1.6 0.8 4.2 0.7 3.3 0.8 1.8 0.9 3.1 0.5 1.4 0.6 2.9 0.8 2.2 0.9 2.3 0.7 1.6 0.9 1.6 0.9 2.8 0.7 2.9 0.6 3.9 0.9 3.7 0.7"/>
<rect x="115.6" y="561.3" width="2.6" height="1.5" fill="#333" opacity="0.80"/>
<path d="M115.1,563.2 L124.6,563.2" stroke="#333" stroke-width="0.40" opacity="0.80"/>
<rect x="135.1" y="560.9" width="1.8" height="2.4" fill="#999" opacity="0.80"/>
<path d="M134.6,563.2 L153.6,563.2" stroke="#111" stroke-width="0.55" opacity="0.90"/>
<rect x="49.6" y="564.0" width="1.6" height="1.0" fill="#222" opacity="0.85"/>
<path d="M53.6,564.38 H78.6" stroke="#222" stroke-width="1.15" opacity="0.80" stroke-dasharray="3.7 0.6 3.9 0.6 2.9 0.8 1.8 0.7 1.4 0.5 1.7 0.9 4.0 0.7 2.1 0.8"/>
<rect x="115.6" y="563.6" width="2.6" height="1.5" fill="#333" opacity="0.80"/>
<path d="M115.1,565.6 L124.6,565.6" stroke="#333" stroke-width="0.40" opacity="0.80"/>
<rect x="135.1" y="563.2" width="1.8" height="2.4" fill="#999" opacity="0.80"/>
<path d="M134.6,565.6 L153.6,565.6" stroke="#111" stroke-width="0.55" opacity="0.90"/>
<rect x="49.6" y="566.3" width="1.6" height="1.0" fill="#222" opacity="0.85"/>
<path d="M53.6,566.73 H113.6" stroke="#222" stroke-width="1.15" opacity="0.80" stroke-dasharray="2.3 0.7 3.6 0.5 1.8 0.7 1.6 0.6 2.9 0.5 2.8 0.6 2.9 0.6 3.1 0.5 3.2 0.5 4.1 0.7 2.6 0.6 3.1 0.8 3.5 0.8 2.7 0.9 3.7 0.8 2.4 0.6 2.9 0.9"/>
<rect x="115.6" y="566.0" width="2.6" height="1.5" fill="#333" opacity="0.80"/>
<path d="M115.1,568.0 L124.6,568.0" stroke="#333" stroke-width="0.40" opacity="0.80"/>
<rect x="135.1" y="565.6" width="1.8" height="2.4" fill="#999" opacity="0.80"/>
<path d="M134.6,568.0 L153.6,568.0" stroke="#111" stroke-width="0.55" opacity="0.90"/>
<rect x="49.6" y="568.6" width="1.6" height="1.0" fill="#222" opacity="0.85"/>
<path d="M53.6,569.08 H101.6" stroke="#222" stroke-width="1.15" opacity="0.80" stroke-dasharray="2.8 0.6 3.9 0.6 1.4 0.8 3.9 0.8 3.0 0.8 2.1 0.7 1.4 0.5 2.5 0.7 2.4 0.5 3.3 0.7 1.9 0.6 2.4 0.6 1.4 0.9 4.1 0.7 3.8 0.6"/>
<rect x="135.1" y="568.5" width="2.0" height="1.2" fill="#222" opacity="0.90"/>
<path d="M134.6,570.3 L153.6,570.3" stroke="#111" stroke-width="0.55" opacity="0.90"/>
<rect x="49.6" y="571.0" width="1.6" height="1.0" fill="#222" opacity="0.85"/>
<path d="M53.6,571.43 H117.5" stroke="#222" stroke-width="1.15" opacity="0.80" stroke-dasharray="1.9 0.8 2.9 0.9 1.5 0.8 1.6 0.7 4.1 0.5 1.9 0.6 2.2 0.5 3.9 0.8 2.4 0.6 3.0 0.5 1.3 0.9 2.1 0.7 4.0 0.9 2.6 0.5 2.1 0.9 3.9 0.5 3.7 0.6 2.6 0.5 3.8 0.9"/>
<rect x="135.1" y="570.8" width="2.0" height="1.2" fill="#222" opacity="0.90"/>
<path d="M134.6,572.6 L153.6,572.6" stroke="#111" stroke-width="0.55" opacity="0.90"/>
<rect x="49.6" y="573.4" width="1.6" height="1.0" fill="#222" opacity="0.85"/>
<path d="M53.6,573.78 H83.1" stroke="#222" stroke-width="1.15" opacity="0.80" stroke-dasharray="3.1 0.5 3.8 0.5 1.5 0.8 2.1 0.9 3.8 0.8 1.6 0.8 4.0 0.7 1.4 0.6 2.1 0.8"/>
<rect x="135.1" y="573.1" width="2.0" height="1.2" fill="#222" opacity="0.90"/>
<path d="M134.6,575.0 L153.6,575.0" stroke="#111" stroke-width="0.55" opacity="0.90"/>
<rect x="49.6" y="575.7" width="1.6" height="1.0" fill="#222" opacity="0.85"/>
<path d="M53.6,576.12 H82.8" stroke="#222" stroke-width="1.15" opacity="0.80" stroke-dasharray="1.7 0.6 3.2 0.8 2.3 0.7 3.9 0.7 1.9 0.6 4.0 0.8 2.0 0.7 1.5 0.9 2.5 0.7"/>
<rect x="135.1" y="575.5" width="2.0" height="1.2" fill="#222" opacity="0.90"/>
<path d="M134.6,577.4 L153.6,577.4" stroke="#111" stroke-width="0.55" opacity="0.90"/>
<rect x="49.6" y="578.0" width="1.6" height="1.0" fill="#222" opacity="0.85"/>
<path d="M53.6,578.48 H101.9" stroke="#222" stroke-width="1.15" opacity="0.80" stroke-dasharray="1.3 0.7 2.1 0.6 3.6 0.5 2.1 0.8 1.9 0.6 2.8 0.5 3.9 0.9 1.3 0.7 3.5 0.6 4.0 0.7 1.7 0.7 3.1 0.6 3.2 0.8 2.8 0.7 3.7 0.8"/>
<rect x="135.1" y="577.9" width="2.0" height="1.2" fill="#222" opacity="0.90"/>
<path d="M134.6,579.7 L153.6,579.7" stroke="#111" stroke-width="0.55" opacity="0.90"/>
<rect x="49.6" y="580.4" width="1.6" height="1.0" fill="#222" opacity="0.85"/>
<path d="M53.6,580.83 H101.3" stroke="#222" stroke-width="1.15" opacity="0.80" stroke-dasharray="4.1 0.5 3.5 0.5 3.0 0.6 2.5 0.8 3.6 0.8 1.9 0.7 1.9 0.7 2.7 0.5 3.0 0.8 2.9 0.8 1.7 0.5 1.3 0.7 2.5 0.6 2.0 0.8 1.4 0.9"/>
<rect x="135.1" y="580.2" width="2.0" height="1.2" fill="#222" opacity="0.90"/>
<path d="M134.6,582.0 L153.6,582.0" stroke="#111" stroke-width="0.55" opacity="0.90"/>
<rect x="49.6" y="582.8" width="1.6" height="1.0" fill="#222" opacity="0.85"/>
<path d="M53.6,583.18 H104.0" stroke="#222" stroke-width="1.15" opacity="0.80" stroke-dasharray="2.8 0.8 1.9 0.5 2.1 0.5 2.1 0.7 2.8 0.6 3.0 0.5 3.7 0.5 2.0 0.5 3.3 0.8 3.6 0.5 2.4 0.6 1.8 0.9 1.3 0.7 3.5 0.9 1.6 0.7 3.4 0.5"/>
<rect x="135.1" y="582.5" width="2.0" height="1.2" fill="#222" opacity="0.90"/>
<path d="M134.6,584.4 L153.6,584.4" stroke="#111" stroke-width="0.55" opacity="0.90"/>
<path d="M46.6,584.8 L153.6,584.8" stroke="#111" stroke-width="0.70" opacity="1.00"/>
<rect x="46.6" y="585.0" width="7.0" height="1.5" fill="#111" opacity="1.00"/>
<rect x="55.6" y="585.2" width="48.4" height="1.1" fill="#222" opacity="0.90"/>
<path d="M46.6,586.8 L153.6,586.8" stroke="#222" stroke-width="0.50" opacity="1.00"/>
<rect x="49.6" y="587.5" width="1.6" height="1.0" fill="#222" opacity="0.85"/>
<path d="M53.6,587.93 H122.3" stroke="#222" stroke-width="1.15" opacity="0.80" stroke-dasharray="1.6 0.6 2.1 0.6 1.4 0.5 4.2 0.8 3.4 0.6 2.0 0.7 1.9 0.7 4.0 0.6 2.2 0.9 3.0 0.5 2.4 0.7 1.4 0.6 3.3 0.8 3.0 0.8 2.6 0.6 3.7 0.6 3.5 0.5 2.2 0.5 2.8 0.5 1.8 0.5 2.6 0.6 2.5 0.9"/>
<rect x="135.1" y="587.3" width="2.0" height="1.2" fill="#222" opacity="0.90"/>
<path d="M134.6,589.1 L153.6,589.1" stroke="#111" stroke-width="0.55" opacity="0.90"/>
<rect x="49.6" y="589.9" width="1.6" height="1.0" fill="#222" opacity="0.85"/>
<path d="M53.6,590.28 H110.3" stroke="#222" stroke-width="1.15" opacity="0.80" stroke-dasharray="3.8 0.5 2.3 0.5 3.3 0.6 2.0 0.5 1.7 0.6 2.4 0.9 3.3 0.6 2.3 0.5 4.0 0.6 3.5 0.8 3.9 0.5 2.2 0.6 1.4 0.8 2.2 0.8 2.8 0.5 2.4 0.6 1.3 0.5 3.0 0.5"/>
<rect x="135.1" y="589.6" width="2.0" height="1.2" fill="#222" opacity="0.90"/>
<path d="M134.6,591.5 L153.6,591.5" stroke="#111" stroke-width="0.55" opacity="0.90"/>
<rect x="49.6" y="592.2" width="1.6" height="1.0" fill="#222" opacity="0.85"/>
<path d="M53.6,592.62 H89.4" stroke="#222" stroke-width="1.15" opacity="0.80" stroke-dasharray="2.5 0.7 1.6 0.8 2.0 0.8 3.2 0.5 1.8 0.6 3.3 0.6 2.4 0.8 1.9 0.6 2.2 0.5 1.3 0.5 3.1 0.7 3.6 0.9"/>
<rect x="135.1" y="592.0" width="2.0" height="1.2" fill="#222" opacity="0.90"/>
<path d="M134.6,593.9 L153.6,593.9" stroke="#111" stroke-width="0.55" opacity="0.90"/>
<rect x="49.6" y="594.5" width="1.6" height="1.0" fill="#222" opacity="0.85"/>
<path d="M53.6,594.98 H88.6" stroke="#222" stroke-width="1.15" opacity="0.80" stroke-dasharray="3.2 0.9 1.8 0.8 3.2 0.9 3.8 0.6 3.1 0.5 2.5 0.6 1.4 0.6 2.2 0.7 2.0 0.5 2.4 0.7 1.7 0.7 1.9 0.5"/>
<rect x="135.1" y="594.4" width="2.0" height="1.2" fill="#222" opacity="0.90"/>
<path d="M134.6,596.2 L153.6,596.2" stroke="#111" stroke-width="0.55" opacity="0.90"/>
<rect x="49.6" y="596.9" width="1.6" height="1.0" fill="#222" opacity="0.85"/>
<path d="M53.6,597.33 H91.1" stroke="#222" stroke-width="1.15" opacity="0.80" stroke-dasharray="2.5 0.5 2.9 0.8 2.9 0.8 1.3 0.6 2.3 0.5 2.4 0.5 2.7 0.7 2.6 0.6 2.0 0.5 2.2 0.9 2.9 0.6 3.2 0.5 2.6 0.7"/>
<rect x="135.1" y="596.7" width="2.0" height="1.2" fill="#222" opacity="0.90"/>
<path d="M134.6,598.5 L153.6,598.5" stroke="#111" stroke-width="0.55" opacity="0.90"/>
<rect x="49.6" y="599.2" width="1.6" height="1.0" fill="#222" opacity="0.85"/>
<path d="M53.6,599.68 H126.0" stroke="#222" stroke-width="1.15" opacity="0.80" stroke-dasharray="2.3 0.7 4.0 0.8 3.1 0.7 2.4 0.6 2.0 0.8 3.8 0.6 3.9 0.5 1.6 0.7 2.1 0.6 4.1 0.5 1.8 0.6 3.2 0.6 1.2 0.7 2.4 0.6 2.7 0.7 2.8 0.7 2.9 0.8 4.1 0.6 2.2 0.8 2.1 0.8 3.3 0.8"/>
<rect x="135.1" y="599.0" width="2.0" height="1.2" fill="#222" opacity="0.90"/>
<path d="M134.6,600.9 L153.6,600.9" stroke="#111" stroke-width="0.55" opacity="0.90"/>
<rect x="49.6" y="601.6" width="1.6" height="1.0" fill="#222" opacity="0.85"/>
<path d="M53.6,602.03 H126.5" stroke="#222" stroke-width="1.15" opacity="0.80" stroke-dasharray="3.7 0.5 3.1 0.7 2.9 0.6 2.1 0.8 2.8 0.6 1.9 0.6 1.7 0.7 1.6 0.5 1.4 0.5 3.3 0.5 2.6 0.8 2.6 0.5 3.8 0.8 1.4 0.6 2.7 0.8 2.4 0.8 2.0 0.8 2.2 0.6 3.5 0.8 3.7 0.7 2.5 0.8 3.1 0.8 3.6 0.5"/>
<rect x="135.1" y="601.4" width="2.0" height="1.2" fill="#222" opacity="0.90"/>
<path d="M134.6,603.2 L153.6,603.2" stroke="#111" stroke-width="0.55" opacity="0.90"/>
<rect x="49.6" y="604.0" width="1.6" height="1.0" fill="#222" opacity="0.85"/>
<path d="M53.6,604.38 H93.1" stroke="#222" stroke-width="1.15" opacity="0.80" stroke-dasharray="3.2 0.6 1.8 0.5 3.0 0.9 4.1 0.5 3.3 0.6 3.1 0.6 4.0 0.9 1.3 0.8 1.6 0.5 2.1 0.8 4.2 0.5 2.2 0.5"/>
<rect x="135.1" y="603.8" width="2.0" height="1.2" fill="#222" opacity="0.90"/>
<path d="M134.6,605.6 L153.6,605.6" stroke="#111" stroke-width="0.55" opacity="0.90"/>
<rect x="49.6" y="606.3" width="1.6" height="1.0" fill="#222" opacity="0.85"/>
<path d="M53.6,606.73 H102.5" stroke="#222" stroke-width="1.15" opacity="0.80" stroke-dasharray="2.6 0.6 2.1 0.8 3.7 0.6 2.4 0.7 3.5 0.9 2.4 0.8 2.8 0.8 1.6 0.5 1.5 0.9 2.0 0.7 1.6 0.6 1.3 0.7 1.6 0.7 2.0 0.6 2.6 0.6 2.0 0.5 1.4 0.9"/>
<rect x="135.1" y="606.1" width="2.0" height="1.2" fill="#222" opacity="0.90"/>
<path d="M134.6,608.0 L153.6,608.0" stroke="#111" stroke-width="0.55" opacity="0.90"/>
<rect x="49.6" y="608.6" width="1.6" height="1.0" fill="#222" opacity="0.85"/>
<path d="M53.6,609.08 H89.2" stroke="#222" stroke-width="1.15" opacity="0.80" stroke-dasharray="1.4 0.5 2.7 0.9 1.8 0.8 2.7 0.6 3.6 0.6 1.4 0.7 3.2 0.7 2.0 0.9 3.8 0.9 2.5 0.8 3.4 0.5"/>
<rect x="135.1" y="608.5" width="2.0" height="1.2" fill="#222" opacity="0.90"/>
<path d="M134.6,610.3 L153.6,610.3" stroke="#111" stroke-width="0.55" opacity="0.90"/>
<path d="M46.6,611.8 L153.6,611.8" stroke="#111" stroke-width="0.70" opacity="1.00"/>
<path d="M134.6,482.8 L134.6,611.8" stroke="#111" stroke-width="0.60" opacity="1.00"/>
<path d="M138.1,482.8 L138.1,611.8" stroke="#222" stroke-width="0.50" opacity="1.00"/>
<rect x="141.6" y="612.5" width="11.0" height="0.9" fill="#333" opacity="0.80"/>
</g></svg>
</div></div>
</body>
</html>
